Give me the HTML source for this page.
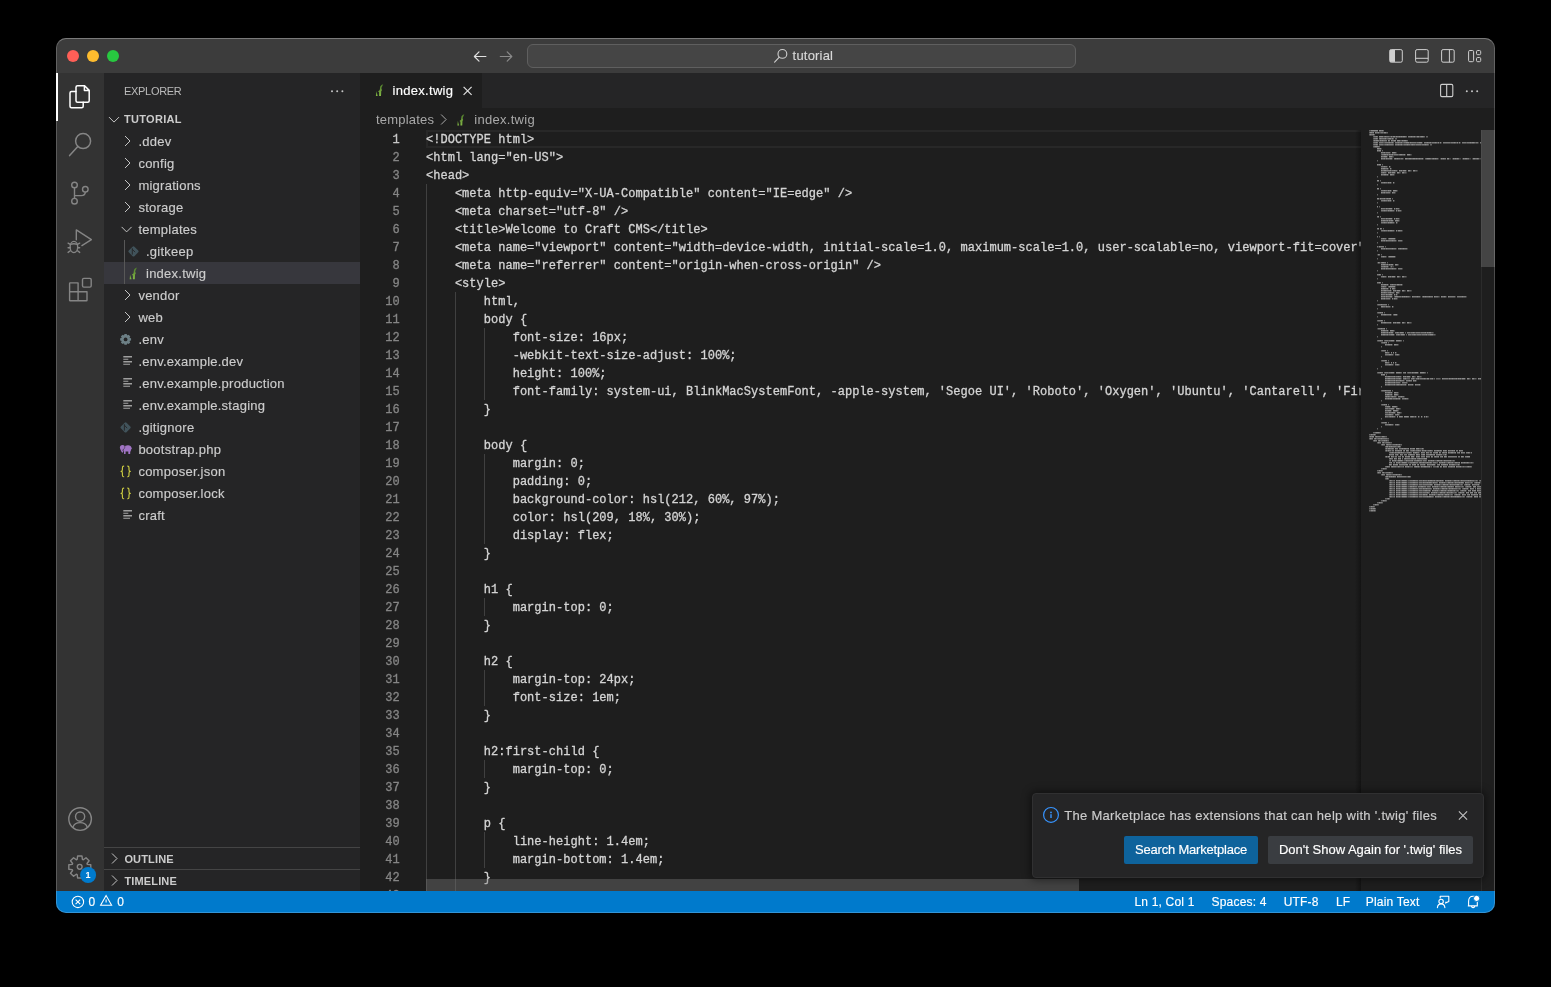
<!DOCTYPE html>
<html><head><meta charset="utf-8"><style>
*{box-sizing:border-box;margin:0;padding:0}
html,body{width:1551px;height:987px;background:#000;overflow:hidden;font-family:"Liberation Sans",sans-serif;color:#ccc}
#win{position:absolute;left:56px;top:38px;width:1439px;height:875px;border-radius:10px;overflow:hidden;background:#1e1e1e;will-change:transform}
#winborder{position:absolute;left:56px;top:38px;width:1439px;height:875px;border-radius:10px;border:1px solid rgba(255,255,255,0.2);border-top-color:rgba(255,255,255,0.32);pointer-events:none;z-index:50}
.a{position:absolute}
svg{position:absolute;overflow:visible}
#title{left:0;top:0;width:1439px;height:35px;background:#3c3c3c}
.tl{position:absolute;top:11.6px;width:12.4px;height:12.4px;border-radius:50%}
#search{position:absolute;left:471.4px;top:6.4px;width:548.6px;height:23.2px;border:1px solid #5f5f5f;background:#454545;border-radius:6px}
#act{left:0;top:35px;width:48px;height:818px;background:#333333}
#side{left:48px;top:35px;width:256px;height:818px;background:#252526}
#editor{left:304px;top:35px;width:1135px;height:818px;background:#1e1e1e;overflow:hidden}
#status{left:0;top:853px;width:1439px;height:22px;background:#007acc;color:#fff;font-size:12px}
.row{position:absolute;left:0;width:256px;height:22px;font-size:13px;line-height:22px;color:#cccccc;white-space:nowrap;letter-spacing:0.25px;-webkit-text-stroke:0.15px #cccccc}
.row span{position:absolute;top:0.5px}
.hdr{position:absolute;left:0;width:256px;height:22px;font-size:11px;font-weight:bold;line-height:22px;color:#cccccc;letter-spacing:0.15px}
.code{position:absolute;left:66px;top:1px;font-family:"Liberation Mono",monospace;font-size:12px;line-height:18px;color:#d4d4d4;white-space:pre;letter-spacing:0.022px;-webkit-text-stroke:0.3px #d4d4d4}
.ln{position:absolute;left:0;width:39.6px;text-align:right;font-family:"Liberation Mono",monospace;font-size:12px;line-height:18px;color:#858585;-webkit-text-stroke:0.3px currentColor}
.guide{position:absolute;width:1px;background:#404040}
.st{position:absolute;top:0;line-height:22px;white-space:nowrap;letter-spacing:0.2px;-webkit-text-stroke:0.15px #fff}
</style></head><body>
<div id="win">
<div id="title" class="a"><div class="tl" style="left:10.8px;background:#ff5f57"></div><div class="tl" style="left:30.8px;background:#febc2e"></div><div class="tl" style="left:50.8px;background:#28c840"></div><svg style="left:0;top:0" width="1" height="1"><g fill="none" stroke-width="1.2" stroke-linecap="round" stroke-linejoin="round"><path d="M418.4 18.5H429.9 M423 13.9L418.4 18.5L423 23.1" stroke="#e0e0e0"/><path d="M444.3 18.5H455.8 M451.2 13.9L455.8 18.5L451.2 23.1" stroke="#8a8a8a"/></g></svg><div id="search"></div><svg style="left:0;top:0" width="1" height="1"><g fill="none" stroke="#cfcfcf" stroke-width="1.1" stroke-linecap="round"><circle cx="726.4" cy="15.9" r="4.4"/><path d="M723.3 19.1L718.6 24.2"/></g></svg><div class="a" style="left:736.6px;top:9px;font-size:13px;line-height:17px;color:#d8d8d8;letter-spacing:0.2px;-webkit-text-stroke:0.15px #d8d8d8">tutorial</div><svg style="left:0;top:0" width="1" height="1"><g fill="none" stroke="#d0d0d0" stroke-width="1"><rect x="1333.7" y="11.6" width="12.6" height="12.6" rx="1.5"/><rect x="1334" y="11.9" width="5" height="12" fill="#d0d0d0" stroke="none"/><rect x="1359.6" y="11.6" width="12.6" height="12.6" rx="1.5"/><path d="M1359.6 20.3H1372.2"/><rect x="1385.6" y="11.6" width="12.6" height="12.6" rx="1.5"/><path d="M1393.4 11.6V24.2"/><rect x="1412.6" y="12.5" width="5" height="11.2" rx="1.2"/><rect x="1420.5" y="12.5" width="4.2" height="4.2" rx="1.2"/><rect x="1420.5" y="19.5" width="4.2" height="4.2" rx="1.2"/></g></svg></div>
<div id="act" class="a"><div class="a" style="left:0;top:0;width:2px;height:48px;background:#fff"></div></div>
<svg style="left:0;top:0" width="1" height="1"><g fill="none" stroke-width="1.5" stroke-linecap="round" stroke-linejoin="round"><path stroke="#ffffff" d="M20 49.3Q20 47.8 21.5 47.8H28.6L33.2 52.4V62.7Q33.2 64.2 31.7 64.2H21.5Q20 64.2 20 62.7Z M28.4 47.9V52.6H33.1"/><path stroke="#ffffff" d="M19.9 53.4H15.5Q14 53.4 14 54.9V68.3Q14 69.8 15.5 69.8H25.7Q27.2 69.8 27.2 68.3V64.3"/><g stroke="#858585"><circle cx="27.1" cy="103.1" r="7.5"/><path d="M21.8 108.4L13.6 117.6"/></g><g stroke="#858585" stroke-width="1.4"><circle cx="18.5" cy="147" r="2.8"/><circle cx="18.5" cy="163.2" r="2.8"/><circle cx="29.3" cy="151.3" r="2.8"/><path d="M18.5 149.8V160.4 M29.3 154.1Q29.3 157.6 25.3 157.6H18.6"/></g><g stroke="#858585" stroke-width="1.4"><path d="M20.3 201.8V191.9L35.4 201.6L25.9 207.6"/><ellipse cx="17.9" cy="209" rx="3.8" ry="5.6"/><path d="M14.4 206.4Q17.9 205.2 21.4 206.4 M12.1 205.2L14.3 206.4 M12.1 209.8H14.1 M12.1 214.4L14.3 212.8 M23.7 205.2L21.5 206.4 M23.7 209.8H21.7 M23.7 214.4L21.5 212.8"/></g><g stroke="#858585" stroke-width="1.4"><path d="M13.6 245.4Q13.6 244.9 14.1 244.9H22.1V253.8H31V262.2Q31 262.7 30.5 262.7H14.1Q13.6 262.7 13.6 262.2Z M13.6 253.8H22.1V262.7"/><rect x="26.5" y="240.4" width="8.7" height="8.7" rx="1.3"/></g><g stroke="#858585" stroke-width="1.4"><circle cx="24.1" cy="781.1" r="11.3"/><circle cx="24.1" cy="778.6" r="4.6"/><path d="M16.9 789.2Q18.5 784.6 24.1 784.6Q29.7 784.6 31.3 789.2"/></g></g></svg><svg style="left:0;top:0" width="1" height="1"><g fill="none" stroke="#858585" stroke-width="1.4" stroke-linejoin="round"><path d="M34.78 826.81 L34.78 831.19 L31.36 831.62 L31.00 832.49 L33.11 835.22 L30.02 838.31 L27.29 836.20 L26.42 836.56 L25.99 839.98 L21.61 839.98 L21.18 836.56 L20.31 836.20 L17.58 838.31 L14.49 835.22 L16.60 832.49 L16.24 831.62 L12.82 831.19 L12.82 826.81 L16.24 826.38 L16.60 825.51 L14.49 822.78 L17.58 819.69 L20.31 821.80 L21.18 821.44 L21.61 818.02 L25.99 818.02 L26.42 821.44 L27.29 821.80 L30.02 819.69 L33.11 822.78 L31.00 825.51 L31.36 826.38Z"/><circle cx="23.7" cy="828.8" r="2.4"/></g><circle cx="32.1" cy="837" r="8" fill="#007acc"/></svg><div class="a" style="left:24px;top:830px;width:16px;height:14px;text-align:center;font-size:9px;font-weight:bold;line-height:14px;color:#fff">1</div><div id="side" class="a"><div class="a" style="left:20px;top:1px;height:35px;line-height:35px;font-size:11px;color:#bbbbbb;letter-spacing:-0.3px">EXPLORER</div><svg style="left:0;top:0" width="1" height="1"><g fill="#c5c5c5"><circle cx="228" cy="18.2" r="1"/><circle cx="233.2" cy="18.2" r="1"/><circle cx="238.4" cy="18.2" r="1"/></g></svg><div class="hdr" style="top:35px"><span class="a" style="left:20px;top:-0.5px;letter-spacing:0.3px">TUTORIAL</span></div><svg style="left:0;top:0" width="1" height="1"><g stroke="#c5c5c5" fill="none" stroke-width="1"><path d="M5.0 44.1L10.0 49.1L15.0 44.1"/></g></svg><div class="row" style="top:57px"><span style="left:34.4px">.ddev</span></div><div class="row" style="top:79px"><span style="left:34.4px">config</span></div><div class="row" style="top:101px"><span style="left:34.4px">migrations</span></div><div class="row" style="top:123px"><span style="left:34.4px">storage</span></div><div class="row" style="top:145px"><span style="left:34.4px">templates</span></div><div class="row" style="top:167px"><span style="left:42.0px">.gitkeep</span></div><div class="a" style="left:0;top:189px;width:256px;height:22px;background:#37373d"></div><div class="row" style="top:189px"><span style="left:42.0px">index.twig</span></div><div class="row" style="top:211px"><span style="left:34.4px">vendor</span></div><div class="row" style="top:233px"><span style="left:34.4px">web</span></div><div class="row" style="top:255px"><span style="left:34.4px">.env</span></div><div class="row" style="top:277px"><span style="left:34.4px">.env.example.dev</span></div><div class="row" style="top:299px"><span style="left:34.4px">.env.example.production</span></div><div class="row" style="top:321px"><span style="left:34.4px">.env.example.staging</span></div><div class="row" style="top:343px"><span style="left:34.4px">.gitignore</span></div><div class="row" style="top:365px"><span style="left:34.4px">bootstrap.php</span></div><div class="row" style="top:387px"><span style="left:34.4px">composer.json</span></div><div class="row" style="top:409px"><span style="left:34.4px">composer.lock</span></div><div class="row" style="top:431px"><span style="left:34.4px">craft</span></div><div class="a" style="left:20px;top:167px;width:1px;height:44px;background:#585858"></div><svg style="left:0;top:0" width="1" height="1"><defs><linearGradient id="twg" x1="0" y1="0" x2="0" y2="1"><stop offset="0" stop-color="#4d7a2a"/><stop offset="0.55" stop-color="#6e9f3a"/><stop offset="1" stop-color="#82b846"/></linearGradient></defs><g stroke="#c5c5c5" fill="none" stroke-width="1"><path d="M21.0 63.0L26.0 68.0L21.0 73.0"/></g><g stroke="#c5c5c5" fill="none" stroke-width="1"><path d="M21.0 85.0L26.0 90.0L21.0 95.0"/></g><g stroke="#c5c5c5" fill="none" stroke-width="1"><path d="M21.0 107.0L26.0 112.0L21.0 117.0"/></g><g stroke="#c5c5c5" fill="none" stroke-width="1"><path d="M21.0 129.0L26.0 134.0L21.0 139.0"/></g><g stroke="#c5c5c5" fill="none" stroke-width="1"><path d="M17.6 153.9L22.6 158.9L27.6 153.9"/></g><g stroke="#c5c5c5" fill="none" stroke-width="1"><path d="M21.0 217.0L26.0 222.0L21.0 227.0"/></g><g stroke="#c5c5c5" fill="none" stroke-width="1"><path d="M21.0 239.0L26.0 244.0L21.0 249.0"/></g><g transform="translate(25.70 194.10) scale(1.000)" fill="url(#twg)"><path d="M3.2 12.1L5.1 12.1L5.35 7.45L6.05 6.45L5.45 4.2L7.3 0.4L5.5 1.2L4.3 2.6L3.85 6.2L2.2 7.6L3.2 8.3Z"/><path d="M0 12.1L1.8 12.1L1.3 10.2L0.4 7.2Z"/></g><g><rect x="25.50" y="174.40" width="8" height="8" rx="1.3" transform="rotate(45 29.50 178.40)" fill="#41535b"/><path d="M28.30 175.20L28.30 181.60 M28.30 176.20L31.10 179.20" stroke="#252526" stroke-width="0.9"/></g><g><rect x="17.60" y="350.40" width="8" height="8" rx="1.3" transform="rotate(45 21.60 354.40)" fill="#41535b"/><path d="M20.40 351.20L20.40 357.60 M20.40 352.20L23.20 355.20" stroke="#252526" stroke-width="0.9"/></g><g fill="#6d8086"><path d="M27.07 265.20 L27.07 267.60 L25.54 267.85 L25.41 268.16 L26.32 269.42 L24.62 271.12 L23.36 270.21 L23.05 270.34 L22.80 271.87 L20.40 271.87 L20.15 270.34 L19.84 270.21 L18.58 271.12 L16.88 269.42 L17.79 268.16 L17.66 267.85 L16.13 267.60 L16.13 265.20 L17.66 264.95 L17.79 264.64 L16.88 263.38 L18.58 261.68 L19.84 262.59 L20.15 262.46 L20.40 260.93 L22.80 260.93 L23.05 262.46 L23.36 262.59 L24.62 261.68 L26.32 263.38 L25.41 264.64 L25.54 264.95Z"/><circle cx="21.6" cy="266.4" r="4.3"/></g><circle cx="21.6" cy="266.4" r="1.9" fill="#252526"/><g fill="#bdbdbd"><rect x="19.3" y="283.2" width="8.7" height="1.2"/><rect x="19.3" y="285.7" width="5" height="1.2" fill="#8f8f8f"/><rect x="19.3" y="288.2" width="8.7" height="1.2"/><rect x="19.3" y="290.7" width="6.7" height="1.2" fill="#8f8f8f"/></g><g fill="#bdbdbd"><rect x="19.3" y="305.2" width="8.7" height="1.2"/><rect x="19.3" y="307.7" width="5" height="1.2" fill="#8f8f8f"/><rect x="19.3" y="310.2" width="8.7" height="1.2"/><rect x="19.3" y="312.7" width="6.7" height="1.2" fill="#8f8f8f"/></g><g fill="#bdbdbd"><rect x="19.3" y="327.2" width="8.7" height="1.2"/><rect x="19.3" y="329.7" width="5" height="1.2" fill="#8f8f8f"/><rect x="19.3" y="332.2" width="8.7" height="1.2"/><rect x="19.3" y="334.7" width="6.7" height="1.2" fill="#8f8f8f"/></g><g fill="#bdbdbd"><rect x="19.3" y="437.2" width="8.7" height="1.2"/><rect x="19.3" y="439.7" width="5" height="1.2" fill="#8f8f8f"/><rect x="19.3" y="442.2" width="8.7" height="1.2"/><rect x="19.3" y="444.7" width="6.7" height="1.2" fill="#8f8f8f"/></g><g transform="translate(15.5 371.9)"><g fill="#a074c4"><ellipse cx="3.0" cy="2.7" rx="2.6" ry="2.5"/><path d="M4.4 1.8Q5.8 0.2 8.6 0.3Q11.6 0.4 12.4 3.6Q11.6 4.2 11.0 6.6H4.4Z"/><rect x="4.5" y="5" width="1.6" height="4.1" rx="0.6"/><rect x="8.8" y="5" width="1.9" height="4.1" rx="0.6"/><path d="M1.0 3.6Q1.2 7.2 3.3 7.9L4.2 5.4Z"/></g><path d="M5.4 1.0Q5.3 3.2 4.6 3.9Q3.8 5 2.7 5.6" stroke="#252526" stroke-width="0.5" fill="none"/></g><g fill="none" stroke="#cbcb41" stroke-width="1.15" stroke-linecap="round" stroke-linejoin="round"><path d="M19.7 393.10Q18.4 393.10 18.4 394.90V396.80Q18.4 398.40 17.1 398.40Q18.4 398.40 18.4 400.00V401.90Q18.4 403.70 19.7 403.70"/><path d="M23.7 393.10Q25.0 393.10 25.0 394.90V396.80Q25.0 398.40 26.3 398.40Q25.0 398.40 25.0 400.00V401.90Q25.0 403.70 23.7 403.70"/></g><g fill="none" stroke="#cbcb41" stroke-width="1.15" stroke-linecap="round" stroke-linejoin="round"><path d="M19.7 415.10Q18.4 415.10 18.4 416.90V418.80Q18.4 420.40 17.1 420.40Q18.4 420.40 18.4 422.00V423.90Q18.4 425.70 19.7 425.70"/><path d="M23.7 415.10Q25.0 415.10 25.0 416.90V418.80Q25.0 420.40 26.3 420.40Q25.0 420.40 25.0 422.00V423.90Q25.0 425.70 23.7 425.70"/></g></svg><div class="a" style="left:0;top:774px;width:256px;height:1px;background:#454545"></div><div class="a" style="left:0;top:796px;width:256px;height:1px;background:#454545"></div><div class="hdr" style="top:775px"><span class="a" style="left:20.4px;top:-0.5px">OUTLINE</span></div><div class="hdr" style="top:797px"><span class="a" style="left:20.4px;top:-0.5px">TIMELINE</span></div><svg style="left:0;top:0" width="1" height="1"><g stroke="#c5c5c5" fill="none" stroke-width="1"><path d="M8.0 780.5L13.0 785.5L8.0 790.5"/><path d="M8.0 802.5L13.0 807.5L8.0 812.5"/></g></svg></div>
<div id="editor" class="a"><div class="a" style="left:0;top:0;width:1135px;height:35px;background:#252526"></div><div class="a" style="left:0;top:0;width:122px;height:35px;background:#1e1e1e"></div><div class="a" style="left:32.5px;top:0;height:35px;line-height:35px;font-size:13px;color:#ffffff;letter-spacing:0.3px;-webkit-text-stroke:0.15px #fff">index.twig</div><svg style="left:0;top:0" width="1" height="1"><g transform="translate(15.90 10.90) scale(1.000)" fill="url(#twg)"><path d="M3.2 12.1L5.1 12.1L5.35 7.45L6.05 6.45L5.45 4.2L7.3 0.4L5.5 1.2L4.3 2.6L3.85 6.2L2.2 7.6L3.2 8.3Z"/><path d="M0 12.1L1.8 12.1L1.3 10.2L0.4 7.2Z"/></g><g stroke="#e0e0e0" stroke-width="1.2" fill="none"><path d="M103.6 13.9L111.6 21.9M111.6 13.9L103.6 21.9"/></g><g stroke="#d0d0d0" stroke-width="1.1" fill="none"><rect x="1080.6" y="11.4" width="12.2" height="12.2" rx="1.3"/><path d="M1086.7 11.4V23.6"/></g><g fill="#c5c5c5"><circle cx="1106.8" cy="18.3" r="1"/><circle cx="1112" cy="18.3" r="1"/><circle cx="1117.2" cy="18.3" r="1"/></g></svg><div class="a" style="left:16px;top:36px;height:22px;line-height:22px;font-size:13px;color:#a9a9a9;letter-spacing:0.2px">templates</div><div class="a" style="left:114.2px;top:36px;height:22px;line-height:22px;font-size:13px;color:#a9a9a9;letter-spacing:0.3px">index.twig</div><svg style="left:0;top:0" width="1" height="1"><g stroke="#a9a9a9" fill="none" stroke-width="1"><path d="M81.1 41.5L86.1 46.5L81.1 51.5"/></g><g transform="translate(97.40 40.90) scale(0.950)" fill="url(#twg)"><path d="M3.2 12.1L5.1 12.1L5.35 7.45L6.05 6.45L5.45 4.2L7.3 0.4L5.5 1.2L4.3 2.6L3.85 6.2L2.2 7.6L3.2 8.3Z"/><path d="M0 12.1L1.8 12.1L1.3 10.2L0.4 7.2Z"/></g></svg><div class="a" style="left:66px;top:57px;width:935px;height:18px;border:2px solid #282828;border-right:none"></div><div class="ln" style="top:58px;color:#c6c6c6;">1</div><div class="ln" style="top:76px;">2</div><div class="ln" style="top:94px;">3</div><div class="ln" style="top:112px;">4</div><div class="ln" style="top:130px;">5</div><div class="ln" style="top:148px;">6</div><div class="ln" style="top:166px;">7</div><div class="ln" style="top:184px;">8</div><div class="ln" style="top:202px;">9</div><div class="ln" style="top:220px;">10</div><div class="ln" style="top:238px;">11</div><div class="ln" style="top:256px;">12</div><div class="ln" style="top:274px;">13</div><div class="ln" style="top:292px;">14</div><div class="ln" style="top:310px;">15</div><div class="ln" style="top:328px;">16</div><div class="ln" style="top:346px;">17</div><div class="ln" style="top:364px;">18</div><div class="ln" style="top:382px;">19</div><div class="ln" style="top:400px;">20</div><div class="ln" style="top:418px;">21</div><div class="ln" style="top:436px;">22</div><div class="ln" style="top:454px;">23</div><div class="ln" style="top:472px;">24</div><div class="ln" style="top:490px;">25</div><div class="ln" style="top:508px;">26</div><div class="ln" style="top:526px;">27</div><div class="ln" style="top:544px;">28</div><div class="ln" style="top:562px;">29</div><div class="ln" style="top:580px;">30</div><div class="ln" style="top:598px;">31</div><div class="ln" style="top:616px;">32</div><div class="ln" style="top:634px;">33</div><div class="ln" style="top:652px;">34</div><div class="ln" style="top:670px;">35</div><div class="ln" style="top:688px;">36</div><div class="ln" style="top:706px;">37</div><div class="ln" style="top:724px;">38</div><div class="ln" style="top:742px;">39</div><div class="ln" style="top:760px;">40</div><div class="ln" style="top:778px;">41</div><div class="ln" style="top:796px;">42</div><div class="ln" style="top:814px;">43</div><div class="a" style="left:0;top:57px;width:1001px;height:761px;overflow:hidden"><div class="guide" style="left:66.0px;top:54px;height:720px"></div><div class="guide" style="left:94.8px;top:162px;height:612px"></div><div class="guide" style="left:123.6px;top:198px;height:72px"></div><div class="guide" style="left:123.6px;top:324px;height:90px"></div><div class="guide" style="left:123.6px;top:468px;height:18px"></div><div class="guide" style="left:123.6px;top:540px;height:36px"></div><div class="guide" style="left:123.6px;top:630px;height:18px"></div><div class="guide" style="left:123.6px;top:702px;height:36px"></div><div class="code" style="left:66px;top:1px">&lt;!DOCTYPE html&gt;</div><div class="code" style="left:66px;top:19px">&lt;html lang="en-US"&gt;</div><div class="code" style="left:66px;top:37px">&lt;head&gt;</div><div class="code" style="left:66px;top:55px">    &lt;meta http-equiv="X-UA-Compatible" content="IE=edge" /&gt;</div><div class="code" style="left:66px;top:73px">    &lt;meta charset="utf-8" /&gt;</div><div class="code" style="left:66px;top:91px">    &lt;title&gt;Welcome to Craft CMS&lt;/title&gt;</div><div class="code" style="left:66px;top:109px">    &lt;meta name="viewport" content="width=device-width, initial-scale=1.0, maximum-scale=1.0, user-scalable=no, viewport-fit=cover" /&gt;</div><div class="code" style="left:66px;top:127px">    &lt;meta name="referrer" content="origin-when-cross-origin" /&gt;</div><div class="code" style="left:66px;top:145px">    &lt;style&gt;</div><div class="code" style="left:66px;top:163px">        html,</div><div class="code" style="left:66px;top:181px">        body {</div><div class="code" style="left:66px;top:199px">            font-size: 16px;</div><div class="code" style="left:66px;top:217px">            -webkit-text-size-adjust: 100%;</div><div class="code" style="left:66px;top:235px">            height: 100%;</div><div class="code" style="left:66px;top:253px">            font-family: system-ui, BlinkMacSystemFont, -apple-system, 'Segoe UI', 'Roboto', 'Oxygen', 'Ubuntu', 'Cantarell', 'Fira Sans', 'Droid Sans', 'Helvetica Neue', sans-serif;</div><div class="code" style="left:66px;top:271px">        }</div><div class="code" style="left:66px;top:289px"></div><div class="code" style="left:66px;top:307px">        body {</div><div class="code" style="left:66px;top:325px">            margin: 0;</div><div class="code" style="left:66px;top:343px">            padding: 0;</div><div class="code" style="left:66px;top:361px">            background-color: hsl(212, 60%, 97%);</div><div class="code" style="left:66px;top:379px">            color: hsl(209, 18%, 30%);</div><div class="code" style="left:66px;top:397px">            display: flex;</div><div class="code" style="left:66px;top:415px">        }</div><div class="code" style="left:66px;top:433px"></div><div class="code" style="left:66px;top:451px">        h1 {</div><div class="code" style="left:66px;top:469px">            margin-top: 0;</div><div class="code" style="left:66px;top:487px">        }</div><div class="code" style="left:66px;top:505px"></div><div class="code" style="left:66px;top:523px">        h2 {</div><div class="code" style="left:66px;top:541px">            margin-top: 24px;</div><div class="code" style="left:66px;top:559px">            font-size: 1em;</div><div class="code" style="left:66px;top:577px">        }</div><div class="code" style="left:66px;top:595px"></div><div class="code" style="left:66px;top:613px">        h2:first-child {</div><div class="code" style="left:66px;top:631px">            margin-top: 0;</div><div class="code" style="left:66px;top:649px">        }</div><div class="code" style="left:66px;top:667px"></div><div class="code" style="left:66px;top:685px">        p {</div><div class="code" style="left:66px;top:703px">            line-height: 1.4em;</div><div class="code" style="left:66px;top:721px">            margin-bottom: 1.4em;</div><div class="code" style="left:66px;top:739px">        }</div><div class="code" style="left:66px;top:757px"></div></div><svg style="left:0;top:0" width="1" height="1" shape-rendering="crispEdges"><path fill="#d4d4d4" fill-opacity="0.22" d="M1062 69h1v2h-1zM1079 69h1v2h-1zM1081 69h1v2h-1zM1098 69h1v2h-1zM1100 69h1v2h-1zM1118 69h1v2h-1zM1021 75h1v2h-1zM1030 79h1v2h-1zM1036 79h1v2h-1zM1045 81h1v2h-1zM1051 81h1v2h-1zM1027 83h1v2h-1zM1033 83h1v2h-1zM1032 85h1v2h-1zM1043 85h1v2h-1zM1063 85h1v2h-1zM1078 85h1v2h-1zM1080 85h1v2h-1zM1089 85h2v2h-2zM1092 85h1v2h-1zM1099 85h2v2h-2zM1102 85h1v2h-1zM1109 85h2v2h-2zM1112 85h1v2h-1zM1119 85h2v2h-2zM1027 93h1v2h-1zM1030 93h1v2h-1zM1028 95h1v2h-1zM1031 95h1v2h-1zM1037 97h1v2h-1zM1046 97h1v2h-1zM1051 97h1v2h-1zM1057 97h1v2h-1zM1026 99h1v2h-1zM1035 99h1v2h-1zM1040 99h1v2h-1zM1046 99h1v2h-1zM1028 101h1v2h-1zM1034 101h1v2h-1zM1031 109h1v2h-1zM1034 109h1v2h-1zM1031 117h1v2h-1zM1037 117h1v2h-1zM1030 119h1v2h-1zM1035 119h1v2h-1zM1019 125h1v2h-1zM1031 127h1v2h-1zM1034 127h1v2h-1zM1032 135h1v2h-1zM1035 135h1v2h-1zM1039 135h1v2h-1zM1034 137h1v2h-1zM1037 137h1v2h-1zM1041 137h1v2h-1zM1032 145h1v2h-1zM1035 145h1v2h-1zM1039 145h1v2h-1zM1033 147h1v2h-1zM1039 147h1v2h-1zM1034 149h1v2h-1zM1037 149h1v2h-1zM1034 157h1v2h-1zM1037 157h1v2h-1zM1042 157h1v2h-1zM1026 165h1v2h-1zM1035 165h1v2h-1zM1036 167h1v2h-1zM1042 167h1v2h-1zM1018 173h1v2h-1zM1036 175h1v2h-1zM1047 175h1v2h-1zM1017 181h1v2h-1zM1026 183h1v2h-1zM1035 183h1v2h-1zM1017 189h1v2h-1zM1020 189h1v2h-1zM1033 191h1v2h-1zM1038 191h1v2h-1zM1028 193h1v2h-1zM1030 193h1v2h-1zM1032 193h2v2h-2zM1036 195h1v2h-1zM1042 195h1v2h-1zM1026 203h1v2h-1zM1035 203h1v2h-1zM1040 203h1v2h-1zM1046 203h1v2h-1zM1028 211h1v2h-1zM1042 211h1v2h-1zM1026 213h1v2h-1zM1035 213h1v2h-1zM1028 215h1v2h-1zM1035 215h1v2h-1zM1031 217h1v2h-1zM1040 217h1v2h-1zM1045 217h1v2h-1zM1051 217h1v2h-1zM1034 219h1v2h-1zM1039 219h1v2h-1zM1032 221h1v2h-1zM1035 221h1v2h-1zM1037 221h1v2h-1zM1032 223h1v2h-1zM1050 223h1v2h-1zM1060 223h1v2h-1zM1079 223h1v2h-1zM1086 223h1v2h-1zM1095 223h1v2h-1zM1106 223h1v2h-1zM1030 225h1v2h-1zM1033 225h1v2h-1zM1037 225h1v2h-1zM1030 233h1v2h-1zM1033 233h1v2h-1zM1031 241h1v2h-1zM1037 241h1v2h-1zM1031 249h1v2h-1zM1040 249h1v2h-1zM1045 249h1v2h-1zM1051 249h1v2h-1zM1017 255h1v2h-1zM1028 257h1v2h-1zM1034 257h1v2h-1zM1033 259h1v2h-1zM1073 259h1v2h-1zM1034 261h1v2h-1zM1075 261h1v2h-1zM1034 267h1v2h-1zM1032 271h1v2h-1zM1038 271h1v2h-1zM1029 279h1v2h-1zM1036 279h1v2h-1zM1033 281h1v2h-1zM1039 281h1v2h-1zM1029 289h1v2h-1zM1036 289h1v2h-1zM1033 291h1v2h-1zM1039 291h1v2h-1zM1034 299h1v2h-1zM1058 299h1v2h-1zM1041 303h1v2h-1zM1050 303h1v2h-1zM1055 303h1v2h-1zM1061 303h1v2h-1zM1041 305h1v2h-1zM1055 305h1v2h-1zM1069 305h1v2h-1zM1073 305h1v2h-1zM1080 305h1v2h-1zM1105 305h1v2h-1zM1110 305h1v2h-1zM1116 305h1v2h-1zM1044 307h1v2h-1zM1056 307h1v2h-1zM1040 309h1v2h-1zM1047 309h1v2h-1zM1046 311h1v2h-1zM1053 311h1v2h-1zM1060 311h1v2h-1zM1032 319h1v2h-1zM1038 319h1v2h-1zM1032 321h1v2h-1zM1038 321h1v2h-1zM1036 323h1v2h-1zM1044 323h1v2h-1zM1040 325h1v2h-1zM1048 325h1v2h-1zM1030 333h1v2h-1zM1037 333h1v2h-1zM1034 335h1v2h-1zM1040 335h1v2h-1zM1031 337h1v2h-1zM1038 337h1v2h-1zM1035 339h1v2h-1zM1041 339h1v2h-1zM1033 341h1v2h-1zM1039 341h1v2h-1zM1035 343h1v2h-1zM1056 343h1v2h-1zM1059 343h1v2h-1zM1062 343h1v2h-1zM1065 343h1v2h-1zM1068 343h1v2h-1zM1033 351h1v2h-1zM1039 351h1v2h-1zM1031 377h1v2h-1zM1061 377h1v2h-1zM1059 379h1v2h-1zM1069 379h1v2h-1zM1110 379h1v2h-1zM1038 381h1v2h-1zM1082 381h1v2h-1zM1034 383h1v2h-1zM1054 383h1v2h-1zM1056 385h1v2h-1zM1043 387h1v2h-1zM1053 387h1v2h-1zM1062 387h1v2h-1zM1047 389h1v2h-1zM1058 389h1v2h-1zM1072 389h1v2h-1zM1113 389h1v2h-1zM1065 391h1v2h-1zM1075 391h1v2h-1zM1060 393h1v2h-1zM1070 393h1v2h-1zM1047 407h1v2h-1zM1058 407h1v2h-1zM1047 409h1v2h-1zM1058 409h1v2h-1zM1120 409h1v2h-1zM1047 411h1v2h-1zM1058 411h1v2h-1zM1110 411h1v2h-1zM1119 411h1v2h-1zM1047 413h1v2h-1zM1057 413h1v2h-1zM1066 413h1v2h-1zM1111 413h1v2h-1zM1047 415h1v2h-1zM1058 415h1v2h-1zM1108 415h1v2h-1zM1047 417h1v2h-1zM1058 417h1v2h-1zM1106 417h1v2h-1zM1047 419h1v2h-1zM1058 419h1v2h-1zM1104 419h1v2h-1zM1047 421h1v2h-1zM1058 421h1v2h-1zM1100 421h1v2h-1zM1047 423h1v2h-1zM1058 423h1v2h-1zM1112 423h1v2h-1z"/><path fill="#d4d4d4" fill-opacity="0.38" d="M1009 57h2v2h-2zM1023 57h1v2h-1zM1009 59h1v2h-1zM1019 59h2v2h-2zM1023 59h1v2h-1zM1026 59h2v2h-2zM1009 61h1v2h-1zM1014 61h1v2h-1zM1013 63h1v2h-1zM1023 63h1v2h-1zM1029 63h2v2h-2zM1032 63h1v2h-1zM1035 63h1v2h-1zM1046 63h1v2h-1zM1055 63h2v2h-2zM1059 63h1v2h-1zM1064 63h1v2h-1zM1066 63h2v2h-2zM1013 65h1v2h-1zM1026 65h2v2h-2zM1031 65h1v2h-1zM1033 65h1v2h-1zM1035 65h2v2h-2zM1013 67h1v2h-1zM1019 67h1v2h-1zM1040 67h2v2h-2zM1047 67h1v2h-1zM1013 69h1v2h-1zM1023 69h2v2h-2zM1033 69h1v2h-1zM1042 69h2v2h-2zM1049 69h1v2h-1zM1056 69h1v2h-1zM1071 69h1v2h-1zM1077 69h1v2h-1zM1090 69h1v2h-1zM1096 69h1v2h-1zM1106 69h1v2h-1zM1115 69h1v2h-1zM1013 71h1v2h-1zM1023 71h2v2h-2zM1033 71h1v2h-1zM1042 71h2v2h-2zM1050 71h1v2h-1zM1055 71h1v2h-1zM1061 71h1v2h-1zM1068 71h1v2h-1zM1070 71h2v2h-2zM1013 73h1v2h-1zM1019 73h1v2h-1zM1022 77h1v2h-1zM1025 79h1v2h-1zM1021 81h1v2h-1zM1028 81h1v2h-1zM1033 81h1v2h-1zM1038 81h1v2h-1zM1050 81h1v2h-1zM1032 83h1v2h-1zM1025 85h1v2h-1zM1040 85h1v2h-1zM1065 85h1v2h-1zM1071 85h1v2h-1zM1017 87h1v2h-1zM1022 91h1v2h-1zM1031 97h1v2h-1zM1042 97h1v2h-1zM1050 97h1v2h-1zM1055 97h2v2h-2zM1031 99h1v2h-1zM1039 99h1v2h-1zM1044 99h2v2h-2zM1017 103h1v2h-1zM1020 107h1v2h-1zM1027 109h1v2h-1zM1017 111h1v2h-1zM1020 115h1v2h-1zM1027 117h1v2h-1zM1025 119h1v2h-1zM1017 121h1v2h-1zM1025 125h1v2h-1zM1032 125h1v2h-1zM1027 127h1v2h-1zM1017 129h1v2h-1zM1019 133h1v2h-1zM1025 135h1v2h-1zM1027 137h1v2h-1zM1017 139h1v2h-1zM1020 143h1v2h-1zM1025 145h1v2h-1zM1028 147h1v2h-1zM1027 149h1v2h-1zM1017 151h1v2h-1zM1023 155h1v2h-1zM1027 157h1v2h-1zM1017 159h1v2h-1zM1019 163h1v2h-1zM1028 165h1v2h-1zM1025 167h1v2h-1zM1017 169h1v2h-1zM1025 173h1v2h-1zM1025 175h1v2h-1zM1017 177h1v2h-1zM1021 181h1v2h-1zM1028 183h1v2h-1zM1017 185h1v2h-1zM1027 189h1v2h-1zM1028 191h1v2h-1zM1025 195h1v2h-1zM1017 197h1v2h-1zM1022 201h1v2h-1zM1031 203h1v2h-1zM1039 203h1v2h-1zM1044 203h2v2h-2zM1017 205h1v2h-1zM1022 209h1v2h-1zM1036 211h1v2h-1zM1028 213h1v2h-1zM1036 217h1v2h-1zM1044 217h1v2h-1zM1049 217h2v2h-2zM1027 219h1v2h-1zM1025 221h1v2h-1zM1025 223h1v2h-1zM1034 223h1v2h-1zM1041 223h1v2h-1zM1049 223h1v2h-1zM1062 223h1v2h-1zM1078 223h1v2h-1zM1025 225h1v2h-1zM1017 227h1v2h-1zM1017 231h1v2h-1zM1028 231h1v2h-1zM1025 233h1v2h-1zM1017 235h1v2h-1zM1017 239h1v2h-1zM1024 239h1v2h-1zM1033 241h1v2h-1zM1017 243h1v2h-1zM1017 247h1v2h-1zM1024 247h1v2h-1zM1036 249h1v2h-1zM1044 249h1v2h-1zM1049 249h2v2h-2zM1017 251h1v2h-1zM1026 255h1v2h-1zM1028 259h1v2h-1zM1039 259h1v2h-1zM1045 259h1v2h-1zM1050 259h1v2h-1zM1055 259h1v2h-1zM1060 259h1v2h-1zM1066 259h1v2h-1zM1071 259h2v2h-2zM1028 261h1v2h-1zM1040 261h1v2h-1zM1046 261h1v2h-1zM1051 261h1v2h-1zM1056 261h1v2h-1zM1061 261h1v2h-1zM1067 261h1v2h-1zM1073 261h2v2h-2zM1017 263h1v2h-1zM1017 267h1v2h-1zM1024 267h1v2h-1zM1028 267h1v2h-1zM1041 267h1v2h-1zM1043 267h1v2h-1zM1021 269h1v2h-1zM1028 269h1v2h-1zM1021 273h1v2h-1zM1021 277h1v2h-1zM1027 277h1v2h-1zM1021 283h1v2h-1zM1021 287h1v2h-1zM1028 287h1v2h-1zM1021 293h1v2h-1zM1017 295h1v2h-1zM1017 299h1v2h-1zM1024 299h1v2h-1zM1028 299h1v2h-1zM1041 299h1v2h-1zM1047 299h1v2h-1zM1051 299h1v2h-1zM1065 299h1v2h-1zM1067 299h1v2h-1zM1026 301h1v2h-1zM1035 303h1v2h-1zM1046 303h1v2h-1zM1054 303h1v2h-1zM1059 303h2v2h-2zM1035 305h1v2h-1zM1046 305h4v2h-4zM1054 305h1v2h-1zM1059 305h1v2h-1zM1066 305h1v2h-1zM1074 305h1v2h-1zM1076 305h4v2h-4zM1088 305h1v2h-1zM1097 305h1v2h-1zM1101 305h1v2h-1zM1109 305h1v2h-1zM1114 305h2v2h-2zM1035 307h1v2h-1zM1035 309h1v2h-1zM1035 311h1v2h-1zM1021 313h1v2h-1zM1021 317h1v2h-1zM1032 317h1v2h-1zM1030 323h1v2h-1zM1032 325h1v2h-1zM1021 327h1v2h-1zM1021 331h1v2h-1zM1028 331h1v2h-1zM1028 335h1v2h-1zM1039 335h1v2h-1zM1028 339h1v2h-1zM1040 339h1v2h-1zM1028 343h1v2h-1zM1054 343h1v2h-1zM1067 343h1v2h-1zM1021 345h1v2h-1zM1021 349h1v2h-1zM1028 349h1v2h-1zM1021 353h1v2h-1zM1017 355h1v2h-1zM1013 359h2v2h-2zM1020 359h1v2h-1zM1009 361h2v2h-2zM1015 361h1v2h-1zM1009 363h1v2h-1zM1020 363h2v2h-2zM1025 363h2v2h-2zM1009 365h1v2h-1zM1016 365h2v2h-2zM1027 365h2v2h-2zM1013 367h1v2h-1zM1020 367h2v2h-2zM1027 367h2v2h-2zM1017 369h1v2h-1zM1024 369h2v2h-2zM1030 369h2v2h-2zM1021 371h1v2h-1zM1031 371h2v2h-2zM1040 371h2v2h-2zM1025 373h1v2h-1zM1028 373h1v2h-1zM1036 373h2v2h-2zM1040 373h1v2h-1zM1025 375h1v2h-1zM1027 375h1v2h-1zM1059 375h3v2h-3zM1063 375h1v2h-1zM1025 377h1v2h-1zM1027 377h1v2h-1zM1050 377h1v2h-1zM1055 377h1v2h-1zM1066 377h2v2h-2zM1072 377h1v2h-1zM1029 379h1v2h-1zM1034 379h1v2h-1zM1044 379h3v2h-3zM1051 379h1v2h-1zM1083 381h2v2h-2zM1086 381h1v2h-1zM1025 383h1v2h-1zM1027 383h1v2h-1zM1050 385h1v2h-1zM1029 387h1v2h-1zM1036 387h2v2h-2zM1044 387h2v2h-2zM1066 387h1v2h-1zM1074 387h3v2h-3zM1082 387h2v2h-2zM1091 387h2v2h-2zM1094 387h1v2h-1zM1033 389h1v2h-1zM1040 389h2v2h-2zM1048 389h2v2h-2zM1076 389h2v2h-2zM1085 389h3v2h-3zM1093 389h2v2h-2zM1109 389h2v2h-2zM1112 389h1v2h-1zM1095 391h3v2h-3zM1099 391h1v2h-1zM1025 393h1v2h-1zM1036 393h2v2h-2zM1040 393h3v2h-3zM1049 393h4v2h-4zM1059 393h1v2h-1zM1071 393h1v2h-1zM1073 393h4v2h-4zM1101 393h2v2h-2zM1104 393h3v2h-3zM1111 393h1v2h-1zM1021 395h2v2h-2zM1026 395h1v2h-1zM1017 397h2v2h-2zM1022 397h1v2h-1zM1017 399h1v2h-1zM1024 399h2v2h-2zM1031 399h2v2h-2zM1021 401h1v2h-1zM1031 401h2v2h-2zM1040 401h2v2h-2zM1025 403h1v2h-1zM1028 403h1v2h-1zM1046 403h2v2h-2zM1050 403h1v2h-1zM1025 405h1v2h-1zM1028 405h1v2h-1zM1029 407h1v2h-1zM1032 407h2v2h-2zM1040 407h2v2h-2zM1048 407h2v2h-2zM1062 407h1v2h-1zM1067 407h1v2h-1zM1075 407h1v2h-1zM1083 407h1v2h-1zM1091 407h3v2h-3zM1099 407h2v2h-2zM1114 407h2v2h-2zM1117 407h1v2h-1zM1119 407h1v2h-1zM1029 409h1v2h-1zM1032 409h2v2h-2zM1040 409h2v2h-2zM1048 409h2v2h-2zM1062 409h1v2h-1zM1072 409h1v2h-1zM1077 409h1v2h-1zM1085 409h3v2h-3zM1093 409h2v2h-2zM1109 409h2v2h-2zM1112 409h1v2h-1zM1114 409h1v2h-1zM1029 411h1v2h-1zM1032 411h2v2h-2zM1040 411h2v2h-2zM1048 411h2v2h-2zM1062 411h1v2h-1zM1072 411h1v2h-1zM1080 411h3v2h-3zM1088 411h2v2h-2zM1099 411h2v2h-2zM1102 411h1v2h-1zM1104 411h1v2h-1zM1029 413h1v2h-1zM1032 413h2v2h-2zM1040 413h2v2h-2zM1048 413h2v2h-2zM1070 413h1v2h-1zM1078 413h3v2h-3zM1086 413h2v2h-2zM1100 413h2v2h-2zM1103 413h1v2h-1zM1105 413h1v2h-1zM1029 415h1v2h-1zM1032 415h2v2h-2zM1040 415h2v2h-2zM1048 415h2v2h-2zM1062 415h1v2h-1zM1071 415h1v2h-1zM1079 415h3v2h-3zM1087 415h2v2h-2zM1097 415h2v2h-2zM1100 415h1v2h-1zM1102 415h1v2h-1zM1029 417h1v2h-1zM1032 417h2v2h-2zM1040 417h2v2h-2zM1048 417h2v2h-2zM1062 417h1v2h-1zM1070 417h1v2h-1zM1078 417h3v2h-3zM1086 417h2v2h-2zM1095 417h2v2h-2zM1098 417h1v2h-1zM1100 417h1v2h-1zM1029 419h1v2h-1zM1032 419h2v2h-2zM1040 419h2v2h-2zM1048 419h2v2h-2zM1062 419h1v2h-1zM1069 419h1v2h-1zM1077 419h3v2h-3zM1085 419h2v2h-2zM1093 419h2v2h-2zM1096 419h1v2h-1zM1098 419h1v2h-1zM1029 421h1v2h-1zM1032 421h2v2h-2zM1040 421h2v2h-2zM1048 421h2v2h-2zM1062 421h1v2h-1zM1067 421h1v2h-1zM1075 421h3v2h-3zM1083 421h2v2h-2zM1089 421h2v2h-2zM1092 421h1v2h-1zM1094 421h1v2h-1zM1029 423h1v2h-1zM1032 423h2v2h-2zM1040 423h2v2h-2zM1048 423h2v2h-2zM1062 423h1v2h-1zM1073 423h1v2h-1zM1081 423h3v2h-3zM1089 423h2v2h-2zM1101 423h2v2h-2zM1104 423h1v2h-1zM1106 423h1v2h-1zM1025 425h2v2h-2zM1029 425h1v2h-1zM1021 427h2v2h-2zM1026 427h1v2h-1zM1017 429h2v2h-2zM1022 429h1v2h-1zM1013 431h2v2h-2zM1018 431h1v2h-1zM1009 433h2v2h-2zM1014 433h1v2h-1zM1009 435h2v2h-2zM1015 435h1v2h-1zM1009 437h2v2h-2zM1015 437h1v2h-1z"/><path fill="#d4d4d4" fill-opacity="0.50" d="M1021 57h1v2h-1zM1012 59h1v2h-1zM1016 59h2v2h-2zM1021 59h2v2h-2zM1011 61h2v2h-2zM1014 63h2v2h-2zM1017 63h1v2h-1zM1024 63h1v2h-1zM1026 63h3v2h-3zM1037 63h2v2h-2zM1040 63h1v2h-1zM1042 63h1v2h-1zM1045 63h1v2h-1zM1048 63h3v2h-3zM1052 63h2v2h-2zM1060 63h1v2h-1zM1063 63h1v2h-1zM1014 65h2v2h-2zM1017 65h1v2h-1zM1019 65h1v2h-1zM1021 65h4v2h-4zM1028 65h1v2h-1zM1015 67h1v2h-1zM1018 67h1v2h-1zM1021 67h1v2h-1zM1023 67h4v2h-4zM1029 67h1v2h-1zM1032 67h2v2h-2zM1043 67h1v2h-1zM1046 67h1v2h-1zM1014 69h2v2h-2zM1017 69h1v2h-1zM1019 69h4v2h-4zM1025 69h4v2h-4zM1030 69h2v2h-2zM1035 69h3v2h-3zM1039 69h2v2h-2zM1044 69h2v2h-2zM1051 69h5v2h-5zM1057 69h2v2h-2zM1064 69h3v2h-3zM1068 69h2v2h-2zM1072 69h3v2h-3zM1076 69h1v2h-1zM1083 69h7v2h-7zM1091 69h3v2h-3zM1095 69h1v2h-1zM1102 69h4v2h-4zM1107 69h3v2h-3zM1111 69h1v2h-1zM1114 69h1v2h-1zM1116 69h2v2h-2zM1120 69h1v2h-1zM1014 71h2v2h-2zM1017 71h1v2h-1zM1019 71h4v2h-4zM1025 71h2v2h-2zM1028 71h5v2h-5zM1035 71h3v2h-3zM1039 71h2v2h-2zM1044 71h3v2h-3zM1048 71h2v2h-2zM1051 71h1v2h-1zM1053 71h2v2h-2zM1056 71h5v2h-5zM1062 71h3v2h-3zM1066 71h2v2h-2zM1014 73h1v2h-1zM1018 73h1v2h-1zM1019 75h1v2h-1zM1018 77h1v2h-1zM1022 79h2v2h-2zM1026 79h4v2h-4zM1035 79h1v2h-1zM1022 81h2v2h-2zM1026 81h1v2h-1zM1030 81h2v2h-2zM1034 81h4v2h-4zM1039 81h1v2h-1zM1042 81h2v2h-2zM1022 83h2v2h-2zM1022 85h2v2h-2zM1027 85h3v2h-3zM1034 85h1v2h-1zM1036 85h1v2h-1zM1038 85h2v2h-2zM1041 85h2v2h-2zM1047 85h2v2h-2zM1051 85h2v2h-2zM1055 85h1v2h-1zM1057 85h2v2h-2zM1060 85h2v2h-2zM1066 85h1v2h-1zM1070 85h1v2h-1zM1072 85h1v2h-1zM1074 85h1v2h-1zM1076 85h2v2h-2zM1082 85h1v2h-1zM1084 85h2v2h-2zM1094 85h1v2h-1zM1096 85h1v2h-1zM1098 85h1v2h-1zM1104 85h1v2h-1zM1107 85h2v2h-2zM1115 85h2v2h-2zM1118 85h1v2h-1zM1018 91h1v2h-1zM1021 93h3v2h-3zM1025 93h2v2h-2zM1022 95h1v2h-1zM1025 95h2v2h-2zM1022 97h2v2h-2zM1026 97h4v2h-4zM1032 97h2v2h-2zM1035 97h2v2h-2zM1040 97h1v2h-1zM1021 99h2v2h-2zM1024 99h2v2h-2zM1029 99h1v2h-1zM1022 101h2v2h-2zM1026 101h1v2h-1zM1032 101h2v2h-2zM1021 109h3v2h-3zM1025 109h2v2h-2zM1029 109h1v2h-1zM1021 117h3v2h-3zM1025 117h2v2h-2zM1029 117h1v2h-1zM1036 117h1v2h-1zM1022 119h2v2h-2zM1026 119h4v2h-4zM1033 119h2v2h-2zM1021 125h3v2h-3zM1026 125h1v2h-1zM1028 125h1v2h-1zM1021 127h3v2h-3zM1025 127h2v2h-2zM1029 127h1v2h-1zM1022 135h3v2h-3zM1027 135h2v2h-2zM1037 135h2v2h-2zM1021 137h3v2h-3zM1025 137h2v2h-2zM1029 137h1v2h-1zM1032 137h2v2h-2zM1039 137h2v2h-2zM1017 143h1v2h-1zM1022 145h3v2h-3zM1027 145h2v2h-2zM1037 145h2v2h-2zM1022 147h1v2h-1zM1025 147h2v2h-2zM1030 147h1v2h-1zM1038 147h1v2h-1zM1021 149h3v2h-3zM1025 149h2v2h-2zM1029 149h1v2h-1zM1032 149h2v2h-2zM1017 155h1v2h-1zM1021 155h1v2h-1zM1021 157h3v2h-3zM1025 157h2v2h-2zM1029 157h1v2h-1zM1032 157h2v2h-2zM1040 157h2v2h-2zM1017 163h1v2h-1zM1021 165h2v2h-2zM1024 165h2v2h-2zM1022 167h2v2h-2zM1027 167h5v2h-5zM1033 167h3v2h-3zM1038 167h4v2h-4zM1017 173h1v2h-1zM1020 173h4v2h-4zM1022 175h2v2h-2zM1027 175h5v2h-5zM1033 175h3v2h-3zM1038 175h2v2h-2zM1041 175h2v2h-2zM1044 175h3v2h-3zM1019 181h1v2h-1zM1021 183h2v2h-2zM1024 183h2v2h-2zM1019 189h1v2h-1zM1021 189h1v2h-1zM1024 189h2v2h-2zM1022 191h1v2h-1zM1025 191h2v2h-2zM1030 191h1v2h-1zM1037 191h1v2h-1zM1021 193h3v2h-3zM1025 193h2v2h-2zM1031 193h1v2h-1zM1022 195h2v2h-2zM1027 195h5v2h-5zM1033 195h3v2h-3zM1038 195h4v2h-4zM1017 201h2v2h-2zM1020 201h1v2h-1zM1021 203h2v2h-2zM1024 203h2v2h-2zM1029 203h1v2h-1zM1017 209h2v2h-2zM1020 209h1v2h-1zM1022 211h2v2h-2zM1026 211h1v2h-1zM1030 211h2v2h-2zM1033 211h3v2h-3zM1039 211h2v2h-2zM1021 213h2v2h-2zM1024 213h2v2h-2zM1022 215h1v2h-1zM1025 215h2v2h-2zM1034 215h1v2h-1zM1022 217h2v2h-2zM1026 217h4v2h-4zM1034 217h1v2h-1zM1022 219h2v2h-2zM1025 219h2v2h-2zM1028 219h2v2h-2zM1031 219h3v2h-3zM1038 219h1v2h-1zM1022 221h3v2h-3zM1027 221h2v2h-2zM1022 223h2v2h-2zM1027 223h3v2h-3zM1038 223h3v2h-3zM1043 223h1v2h-1zM1045 223h1v2h-1zM1047 223h2v2h-2zM1053 223h4v2h-4zM1058 223h2v2h-2zM1064 223h1v2h-1zM1066 223h3v2h-3zM1070 223h3v2h-3zM1075 223h3v2h-3zM1082 223h2v2h-2zM1085 223h1v2h-1zM1089 223h6v2h-6zM1097 223h5v2h-5zM1103 223h3v2h-3zM1022 225h2v2h-2zM1026 225h4v2h-4zM1035 225h2v2h-2zM1018 231h3v2h-3zM1022 231h5v2h-5zM1023 233h2v2h-2zM1027 233h3v2h-3zM1018 239h2v2h-2zM1021 239h1v2h-1zM1022 241h2v2h-2zM1026 241h4v2h-4zM1018 247h3v2h-3zM1022 247h1v2h-1zM1022 249h2v2h-2zM1026 249h4v2h-4zM1034 249h1v2h-1zM1018 255h3v2h-3zM1022 255h2v2h-2zM1022 257h1v2h-1zM1025 257h2v2h-2zM1033 257h1v2h-1zM1022 259h1v2h-1zM1025 259h2v2h-2zM1030 259h1v2h-1zM1035 259h2v2h-2zM1038 259h1v2h-1zM1043 259h1v2h-1zM1047 259h3v2h-3zM1051 259h2v2h-2zM1054 259h1v2h-1zM1056 259h4v2h-4zM1061 259h4v2h-4zM1068 259h1v2h-1zM1022 261h1v2h-1zM1025 261h2v2h-2zM1029 261h2v2h-2zM1036 261h2v2h-2zM1039 261h1v2h-1zM1044 261h1v2h-1zM1048 261h3v2h-3zM1052 261h2v2h-2zM1055 261h1v2h-1zM1057 261h4v2h-4zM1062 261h4v2h-4zM1068 261h2v2h-2zM1018 267h2v2h-2zM1021 267h2v2h-2zM1025 267h3v2h-3zM1029 267h2v2h-2zM1040 267h1v2h-1zM1022 269h2v2h-2zM1025 269h1v2h-1zM1026 271h2v2h-2zM1030 271h1v2h-1zM1036 271h2v2h-2zM1022 277h4v2h-4zM1027 279h2v2h-2zM1025 281h4v2h-4zM1031 281h2v2h-2zM1035 281h2v2h-2zM1038 281h1v2h-1zM1022 287h3v2h-3zM1026 287h1v2h-1zM1027 289h2v2h-2zM1025 291h4v2h-4zM1031 291h2v2h-2zM1035 291h2v2h-2zM1038 291h1v2h-1zM1018 299h2v2h-2zM1021 299h2v2h-2zM1025 299h3v2h-3zM1029 299h2v2h-2zM1040 299h1v2h-1zM1043 299h2v2h-2zM1048 299h3v2h-3zM1053 299h2v2h-2zM1064 299h1v2h-1zM1022 301h1v2h-1zM1026 303h2v2h-2zM1030 303h4v2h-4zM1036 303h2v2h-2zM1039 303h2v2h-2zM1044 303h1v2h-1zM1026 305h2v2h-2zM1030 305h4v2h-4zM1036 305h3v2h-3zM1040 305h1v2h-1zM1043 305h2v2h-2zM1051 305h2v2h-2zM1056 305h2v2h-2zM1060 305h4v2h-4zM1065 305h1v2h-1zM1070 305h2v2h-2zM1083 305h5v2h-5zM1090 305h2v2h-2zM1093 305h3v2h-3zM1099 305h1v2h-1zM1119 305h1v2h-1zM1026 307h2v2h-2zM1030 307h4v2h-4zM1037 307h3v2h-3zM1041 307h3v2h-3zM1046 307h3v2h-3zM1050 307h2v2h-2zM1054 307h1v2h-1zM1026 309h2v2h-2zM1030 309h4v2h-4zM1036 309h4v2h-4zM1042 309h5v2h-5zM1026 311h2v2h-2zM1030 311h4v2h-4zM1036 311h1v2h-1zM1039 311h2v2h-2zM1042 311h3v2h-3zM1049 311h3v2h-3zM1056 311h3v2h-3zM1022 317h3v2h-3zM1026 317h5v2h-5zM1026 319h2v2h-2zM1030 319h1v2h-1zM1036 319h2v2h-2zM1026 321h1v2h-1zM1029 321h2v2h-2zM1037 321h1v2h-1zM1025 323h1v2h-1zM1027 323h1v2h-1zM1029 323h1v2h-1zM1031 323h1v2h-1zM1033 323h3v2h-3zM1038 323h3v2h-3zM1042 323h2v2h-2zM1026 325h2v2h-2zM1029 325h1v2h-1zM1033 325h3v2h-3zM1037 325h2v2h-2zM1042 325h3v2h-3zM1046 325h2v2h-2zM1022 331h2v2h-2zM1025 331h1v2h-1zM1025 333h2v2h-2zM1036 333h1v2h-1zM1025 335h3v2h-3zM1029 335h2v2h-2zM1026 337h2v2h-2zM1037 337h1v2h-1zM1025 339h3v2h-3zM1030 339h2v2h-2zM1025 341h4v2h-4zM1031 341h2v2h-2zM1035 341h2v2h-2zM1038 341h1v2h-1zM1026 343h2v2h-2zM1029 343h1v2h-1zM1031 343h1v2h-1zM1033 343h2v2h-2zM1042 343h1v2h-1zM1048 343h1v2h-1zM1050 343h1v2h-1zM1053 343h1v2h-1zM1022 349h3v2h-3zM1026 349h1v2h-1zM1025 351h4v2h-4zM1031 351h2v2h-2zM1035 351h2v2h-2zM1038 351h1v2h-1zM1015 359h1v2h-1zM1019 359h1v2h-1zM1012 361h2v2h-2zM1011 363h1v2h-1zM1015 363h1v2h-1zM1017 363h3v2h-3zM1024 363h1v2h-1zM1011 365h2v2h-2zM1014 365h1v2h-1zM1018 365h3v2h-3zM1022 365h5v2h-5zM1015 367h2v2h-2zM1018 367h1v2h-1zM1022 367h2v2h-2zM1025 367h1v2h-1zM1019 369h2v2h-2zM1022 369h1v2h-1zM1026 369h4v2h-4zM1023 371h2v2h-2zM1026 371h1v2h-1zM1028 371h3v2h-3zM1033 371h3v2h-3zM1037 371h2v2h-2zM1030 373h1v2h-1zM1032 373h4v2h-4zM1030 375h2v2h-2zM1033 375h1v2h-1zM1036 375h2v2h-2zM1039 375h3v2h-3zM1043 375h1v2h-1zM1046 375h2v2h-2zM1051 375h2v2h-2zM1029 377h2v2h-2zM1032 377h2v2h-2zM1036 377h2v2h-2zM1039 377h2v2h-2zM1043 377h1v2h-1zM1048 377h1v2h-1zM1051 377h2v2h-2zM1054 377h1v2h-1zM1056 377h2v2h-2zM1059 377h2v2h-2zM1063 377h2v2h-2zM1068 377h2v2h-2zM1071 377h1v2h-1zM1075 377h2v2h-2zM1079 377h1v2h-1zM1081 377h1v2h-1zM1084 377h1v2h-1zM1086 377h1v2h-1zM1089 377h3v2h-3zM1093 377h1v2h-1zM1096 377h2v2h-2zM1100 377h3v2h-3zM1030 379h2v2h-2zM1033 379h1v2h-1zM1036 379h2v2h-2zM1040 379h1v2h-1zM1042 379h2v2h-2zM1047 379h2v2h-2zM1050 379h1v2h-1zM1054 379h1v2h-1zM1057 379h2v2h-2zM1062 379h3v2h-3zM1067 379h2v2h-2zM1070 379h2v2h-2zM1073 379h3v2h-3zM1080 379h1v2h-1zM1082 379h1v2h-1zM1084 379h2v2h-2zM1089 379h2v2h-2zM1093 379h2v2h-2zM1097 379h2v2h-2zM1102 379h3v2h-3zM1106 379h2v2h-2zM1109 379h1v2h-1zM1111 379h1v2h-1zM1030 381h3v2h-3zM1035 381h2v2h-2zM1041 381h2v2h-2zM1044 381h3v2h-3zM1048 381h2v2h-2zM1052 381h3v2h-3zM1058 381h2v2h-2zM1061 381h2v2h-2zM1066 381h4v2h-4zM1072 381h2v2h-2zM1076 381h3v2h-3zM1080 381h2v2h-2zM1032 383h2v2h-2zM1035 383h2v2h-2zM1038 383h3v2h-3zM1043 383h1v2h-1zM1046 383h2v2h-2zM1057 383h1v2h-1zM1059 383h1v2h-1zM1061 383h4v2h-4zM1067 383h3v2h-3zM1072 383h1v2h-1zM1074 383h1v2h-1zM1076 383h2v2h-2zM1080 383h2v2h-2zM1086 383h1v2h-1zM1088 383h9v2h-9zM1098 383h2v2h-2zM1103 383h1v2h-1zM1105 383h2v2h-2zM1029 385h1v2h-1zM1031 385h2v2h-2zM1035 385h2v2h-2zM1039 385h1v2h-1zM1042 385h1v2h-1zM1044 385h1v2h-1zM1046 385h4v2h-4zM1051 385h1v2h-1zM1053 385h2v2h-2zM1057 385h2v2h-2zM1060 385h4v2h-4zM1030 387h1v2h-1zM1033 387h2v2h-2zM1042 387h1v2h-1zM1047 387h5v2h-5zM1054 387h3v2h-3zM1059 387h3v2h-3zM1063 387h3v2h-3zM1069 387h2v2h-2zM1072 387h1v2h-1zM1079 387h2v2h-2zM1085 387h5v2h-5zM1093 387h1v2h-1zM1029 389h2v2h-2zM1034 389h1v2h-1zM1037 389h2v2h-2zM1046 389h1v2h-1zM1050 389h3v2h-3zM1055 389h3v2h-3zM1059 389h1v2h-1zM1061 389h2v2h-2zM1064 389h3v2h-3zM1068 389h2v2h-2zM1071 389h1v2h-1zM1073 389h3v2h-3zM1080 389h2v2h-2zM1083 389h1v2h-1zM1090 389h2v2h-2zM1097 389h2v2h-2zM1102 389h2v2h-2zM1105 389h2v2h-2zM1108 389h1v2h-1zM1111 389h1v2h-1zM1031 391h1v2h-1zM1034 391h2v2h-2zM1039 391h7v2h-7zM1049 391h2v2h-2zM1053 391h1v2h-1zM1057 391h1v2h-1zM1060 391h4v2h-4zM1068 391h4v2h-4zM1077 391h2v2h-2zM1082 391h1v2h-1zM1086 391h1v2h-1zM1090 391h2v2h-2zM1094 391h1v2h-1zM1026 393h1v2h-1zM1028 393h2v2h-2zM1031 393h1v2h-1zM1033 393h3v2h-3zM1039 393h1v2h-1zM1043 393h1v2h-1zM1046 393h2v2h-2zM1054 393h1v2h-1zM1057 393h1v2h-1zM1062 393h2v2h-2zM1066 393h3v2h-3zM1078 393h1v2h-1zM1081 393h1v2h-1zM1084 393h3v2h-3zM1088 393h3v2h-3zM1092 393h2v2h-2zM1097 393h3v2h-3zM1103 393h1v2h-1zM1107 393h1v2h-1zM1109 393h2v2h-2zM1024 395h2v2h-2zM1020 397h2v2h-2zM1019 399h2v2h-2zM1022 399h1v2h-1zM1026 399h3v2h-3zM1030 399h1v2h-1zM1023 401h2v2h-2zM1026 401h1v2h-1zM1028 401h3v2h-3zM1033 401h3v2h-3zM1037 401h2v2h-2zM1030 403h1v2h-1zM1032 403h1v2h-1zM1034 403h2v2h-2zM1038 403h8v2h-8zM1026 405h1v2h-1zM1031 407h1v2h-1zM1034 407h1v2h-1zM1037 407h2v2h-2zM1046 407h1v2h-1zM1050 407h3v2h-3zM1055 407h3v2h-3zM1059 407h3v2h-3zM1064 407h3v2h-3zM1069 407h1v2h-1zM1072 407h2v2h-2zM1076 407h1v2h-1zM1078 407h2v2h-2zM1081 407h1v2h-1zM1086 407h2v2h-2zM1089 407h1v2h-1zM1096 407h2v2h-2zM1102 407h6v2h-6zM1109 407h1v2h-1zM1111 407h3v2h-3zM1116 407h1v2h-1zM1120 407h1v2h-1zM1031 409h1v2h-1zM1034 409h1v2h-1zM1037 409h2v2h-2zM1046 409h1v2h-1zM1050 409h3v2h-3zM1055 409h3v2h-3zM1059 409h3v2h-3zM1064 409h3v2h-3zM1068 409h1v2h-1zM1071 409h1v2h-1zM1074 409h3v2h-3zM1080 409h2v2h-2zM1083 409h1v2h-1zM1090 409h2v2h-2zM1096 409h3v2h-3zM1100 409h1v2h-1zM1103 409h1v2h-1zM1106 409h3v2h-3zM1111 409h1v2h-1zM1115 409h1v2h-1zM1117 409h2v2h-2zM1031 411h1v2h-1zM1034 411h1v2h-1zM1037 411h2v2h-2zM1046 411h1v2h-1zM1050 411h3v2h-3zM1055 411h3v2h-3zM1059 411h3v2h-3zM1063 411h7v2h-7zM1075 411h2v2h-2zM1078 411h1v2h-1zM1085 411h2v2h-2zM1091 411h6v2h-6zM1101 411h1v2h-1zM1105 411h1v2h-1zM1107 411h2v2h-2zM1113 411h5v2h-5zM1031 413h1v2h-1zM1034 413h1v2h-1zM1037 413h2v2h-2zM1046 413h1v2h-1zM1052 413h1v2h-1zM1054 413h3v2h-3zM1058 413h3v2h-3zM1063 413h3v2h-3zM1067 413h3v2h-3zM1073 413h2v2h-2zM1076 413h1v2h-1zM1083 413h2v2h-2zM1090 413h1v2h-1zM1092 413h2v2h-2zM1097 413h3v2h-3zM1102 413h1v2h-1zM1106 413h1v2h-1zM1108 413h2v2h-2zM1117 413h4v2h-4zM1031 415h1v2h-1zM1034 415h1v2h-1zM1037 415h2v2h-2zM1046 415h1v2h-1zM1050 415h3v2h-3zM1055 415h3v2h-3zM1059 415h3v2h-3zM1064 415h2v2h-2zM1067 415h4v2h-4zM1074 415h2v2h-2zM1077 415h1v2h-1zM1084 415h2v2h-2zM1090 415h2v2h-2zM1093 415h4v2h-4zM1099 415h1v2h-1zM1103 415h1v2h-1zM1105 415h2v2h-2zM1111 415h3v2h-3zM1115 415h1v2h-1zM1118 415h3v2h-3zM1031 417h1v2h-1zM1034 417h1v2h-1zM1037 417h2v2h-2zM1046 417h1v2h-1zM1050 417h3v2h-3zM1055 417h3v2h-3zM1059 417h3v2h-3zM1063 417h2v2h-2zM1067 417h2v2h-2zM1073 417h2v2h-2zM1076 417h1v2h-1zM1083 417h2v2h-2zM1089 417h1v2h-1zM1092 417h2v2h-2zM1097 417h1v2h-1zM1101 417h1v2h-1zM1103 417h2v2h-2zM1109 417h1v2h-1zM1113 417h1v2h-1zM1118 417h3v2h-3zM1031 419h1v2h-1zM1034 419h1v2h-1zM1037 419h2v2h-2zM1046 419h1v2h-1zM1050 419h3v2h-3zM1055 419h3v2h-3zM1059 419h3v2h-3zM1063 419h4v2h-4zM1068 419h1v2h-1zM1072 419h2v2h-2zM1075 419h1v2h-1zM1082 419h2v2h-2zM1088 419h3v2h-3zM1092 419h1v2h-1zM1095 419h1v2h-1zM1099 419h1v2h-1zM1101 419h2v2h-2zM1107 419h1v2h-1zM1114 419h2v2h-2zM1118 419h1v2h-1zM1031 421h1v2h-1zM1034 421h1v2h-1zM1037 421h2v2h-2zM1046 421h1v2h-1zM1050 421h3v2h-3zM1055 421h3v2h-3zM1059 421h3v2h-3zM1065 421h1v2h-1zM1070 421h2v2h-2zM1073 421h1v2h-1zM1080 421h2v2h-2zM1087 421h1v2h-1zM1091 421h1v2h-1zM1095 421h1v2h-1zM1097 421h2v2h-2zM1103 421h3v2h-3zM1107 421h2v2h-2zM1112 421h2v2h-2zM1115 421h2v2h-2zM1119 421h1v2h-1zM1031 423h1v2h-1zM1034 423h1v2h-1zM1037 423h2v2h-2zM1046 423h1v2h-1zM1050 423h3v2h-3zM1055 423h3v2h-3zM1059 423h3v2h-3zM1063 423h4v2h-4zM1068 423h1v2h-1zM1071 423h2v2h-2zM1076 423h2v2h-2zM1079 423h1v2h-1zM1086 423h2v2h-2zM1092 423h3v2h-3zM1096 423h1v2h-1zM1099 423h2v2h-2zM1103 423h1v2h-1zM1107 423h1v2h-1zM1109 423h2v2h-2zM1116 423h1v2h-1zM1119 423h2v2h-2zM1027 425h1v2h-1zM1024 427h2v2h-2zM1020 429h2v2h-2zM1016 431h2v2h-2zM1012 433h2v2h-2zM1012 435h1v2h-1zM1013 437h1v2h-1z"/><path fill="#d4d4d4" fill-opacity="0.60" d="M1011 57h7v2h-7zM1019 57h2v2h-2zM1022 57h1v2h-1zM1010 59h2v2h-2zM1013 59h1v2h-1zM1015 59h1v2h-1zM1018 59h1v2h-1zM1024 59h2v2h-2zM1010 61h1v2h-1zM1013 61h1v2h-1zM1016 63h1v2h-1zM1019 63h4v2h-4zM1025 63h1v2h-1zM1031 63h1v2h-1zM1033 63h2v2h-2zM1036 63h1v2h-1zM1039 63h1v2h-1zM1041 63h1v2h-1zM1043 63h2v2h-2zM1051 63h1v2h-1zM1054 63h1v2h-1zM1057 63h2v2h-2zM1061 63h2v2h-2zM1016 65h1v2h-1zM1020 65h1v2h-1zM1025 65h1v2h-1zM1029 65h2v2h-2zM1032 65h1v2h-1zM1014 67h1v2h-1zM1016 67h2v2h-2zM1020 67h1v2h-1zM1022 67h1v2h-1zM1028 67h1v2h-1zM1031 67h1v2h-1zM1034 67h2v2h-2zM1037 67h3v2h-3zM1042 67h1v2h-1zM1044 67h2v2h-2zM1016 69h1v2h-1zM1029 69h1v2h-1zM1032 69h1v2h-1zM1038 69h1v2h-1zM1041 69h1v2h-1zM1046 69h3v2h-3zM1050 69h1v2h-1zM1059 69h3v2h-3zM1067 69h1v2h-1zM1070 69h1v2h-1zM1075 69h1v2h-1zM1078 69h1v2h-1zM1080 69h1v2h-1zM1094 69h1v2h-1zM1097 69h1v2h-1zM1099 69h1v2h-1zM1110 69h1v2h-1zM1112 69h2v2h-2zM1016 71h1v2h-1zM1027 71h1v2h-1zM1038 71h1v2h-1zM1041 71h1v2h-1zM1047 71h1v2h-1zM1052 71h1v2h-1zM1065 71h1v2h-1zM1015 73h3v2h-3zM1017 75h2v2h-2zM1020 75h1v2h-1zM1017 77h1v2h-1zM1019 77h2v2h-2zM1021 79h1v2h-1zM1024 79h1v2h-1zM1032 79h3v2h-3zM1024 81h2v2h-2zM1027 81h1v2h-1zM1029 81h1v2h-1zM1032 81h1v2h-1zM1040 81h2v2h-2zM1044 81h1v2h-1zM1047 81h3v2h-3zM1021 83h1v2h-1zM1024 83h3v2h-3zM1029 83h3v2h-3zM1021 85h1v2h-1zM1024 85h1v2h-1zM1026 85h1v2h-1zM1030 85h2v2h-2zM1035 85h1v2h-1zM1037 85h1v2h-1zM1045 85h2v2h-2zM1049 85h2v2h-2zM1053 85h2v2h-2zM1056 85h1v2h-1zM1059 85h1v2h-1zM1062 85h1v2h-1zM1067 85h3v2h-3zM1073 85h1v2h-1zM1075 85h1v2h-1zM1081 85h1v2h-1zM1083 85h1v2h-1zM1087 85h2v2h-2zM1093 85h1v2h-1zM1095 85h1v2h-1zM1097 85h1v2h-1zM1103 85h1v2h-1zM1105 85h2v2h-2zM1113 85h2v2h-2zM1117 85h1v2h-1zM1017 91h1v2h-1zM1019 91h2v2h-2zM1024 93h1v2h-1zM1029 93h1v2h-1zM1021 95h1v2h-1zM1023 95h2v2h-2zM1027 95h1v2h-1zM1030 95h1v2h-1zM1021 97h1v2h-1zM1024 97h2v2h-2zM1030 97h1v2h-1zM1034 97h1v2h-1zM1039 97h1v2h-1zM1041 97h1v2h-1zM1043 97h3v2h-3zM1048 97h2v2h-2zM1053 97h2v2h-2zM1023 99h1v2h-1zM1028 99h1v2h-1zM1030 99h1v2h-1zM1032 99h3v2h-3zM1037 99h2v2h-2zM1042 99h2v2h-2zM1021 101h1v2h-1zM1024 101h2v2h-2zM1027 101h1v2h-1zM1030 101h2v2h-2zM1017 107h2v2h-2zM1024 109h1v2h-1zM1028 109h1v2h-1zM1030 109h1v2h-1zM1033 109h1v2h-1zM1017 115h2v2h-2zM1024 117h1v2h-1zM1028 117h1v2h-1zM1030 117h1v2h-1zM1033 117h3v2h-3zM1021 119h1v2h-1zM1024 119h1v2h-1zM1032 119h1v2h-1zM1017 125h2v2h-2zM1020 125h1v2h-1zM1024 125h1v2h-1zM1027 125h1v2h-1zM1029 125h2v2h-2zM1024 127h1v2h-1zM1028 127h1v2h-1zM1030 127h1v2h-1zM1033 127h1v2h-1zM1017 133h1v2h-1zM1021 135h1v2h-1zM1026 135h1v2h-1zM1029 135h3v2h-3zM1034 135h1v2h-1zM1036 135h1v2h-1zM1024 137h1v2h-1zM1028 137h1v2h-1zM1030 137h2v2h-2zM1036 137h1v2h-1zM1038 137h1v2h-1zM1018 143h1v2h-1zM1021 145h1v2h-1zM1026 145h1v2h-1zM1029 145h3v2h-3zM1034 145h1v2h-1zM1036 145h1v2h-1zM1021 147h1v2h-1zM1023 147h2v2h-2zM1027 147h1v2h-1zM1029 147h1v2h-1zM1031 147h2v2h-2zM1035 147h3v2h-3zM1024 149h1v2h-1zM1028 149h1v2h-1zM1030 149h2v2h-2zM1036 149h1v2h-1zM1018 155h1v2h-1zM1020 155h1v2h-1zM1024 157h1v2h-1zM1028 157h1v2h-1zM1030 157h2v2h-2zM1036 157h1v2h-1zM1038 157h2v2h-2zM1023 165h1v2h-1zM1029 165h6v2h-6zM1021 167h1v2h-1zM1024 167h1v2h-1zM1026 167h1v2h-1zM1032 167h1v2h-1zM1019 173h1v2h-1zM1021 175h1v2h-1zM1024 175h1v2h-1zM1026 175h1v2h-1zM1032 175h1v2h-1zM1040 175h1v2h-1zM1043 175h1v2h-1zM1018 181h1v2h-1zM1023 183h1v2h-1zM1029 183h6v2h-6zM1018 189h1v2h-1zM1022 189h2v2h-2zM1021 191h1v2h-1zM1023 191h2v2h-2zM1027 191h1v2h-1zM1029 191h1v2h-1zM1031 191h2v2h-2zM1035 191h2v2h-2zM1024 193h1v2h-1zM1027 193h1v2h-1zM1021 195h1v2h-1zM1024 195h1v2h-1zM1026 195h1v2h-1zM1032 195h1v2h-1zM1019 201h1v2h-1zM1023 203h1v2h-1zM1028 203h1v2h-1zM1030 203h1v2h-1zM1032 203h3v2h-3zM1037 203h2v2h-2zM1042 203h2v2h-2zM1019 209h1v2h-1zM1021 211h1v2h-1zM1024 211h2v2h-2zM1027 211h1v2h-1zM1032 211h1v2h-1zM1037 211h2v2h-2zM1041 211h1v2h-1zM1023 213h1v2h-1zM1029 213h6v2h-6zM1021 215h1v2h-1zM1023 215h2v2h-2zM1027 215h1v2h-1zM1030 215h1v2h-1zM1032 215h2v2h-2zM1021 217h1v2h-1zM1024 217h2v2h-2zM1030 217h1v2h-1zM1033 217h1v2h-1zM1035 217h1v2h-1zM1037 217h3v2h-3zM1042 217h2v2h-2zM1047 217h2v2h-2zM1021 219h1v2h-1zM1024 219h1v2h-1zM1030 219h1v2h-1zM1036 219h2v2h-2zM1021 221h1v2h-1zM1026 221h1v2h-1zM1029 221h3v2h-3zM1034 221h1v2h-1zM1036 221h1v2h-1zM1021 223h1v2h-1zM1024 223h1v2h-1zM1026 223h1v2h-1zM1030 223h2v2h-2zM1035 223h3v2h-3zM1042 223h1v2h-1zM1044 223h1v2h-1zM1046 223h1v2h-1zM1052 223h1v2h-1zM1057 223h1v2h-1zM1063 223h1v2h-1zM1065 223h1v2h-1zM1069 223h1v2h-1zM1074 223h1v2h-1zM1081 223h1v2h-1zM1084 223h1v2h-1zM1088 223h1v2h-1zM1102 223h1v2h-1zM1021 225h1v2h-1zM1024 225h1v2h-1zM1032 225h1v2h-1zM1034 225h1v2h-1zM1021 231h1v2h-1zM1021 233h2v2h-2zM1026 233h1v2h-1zM1032 233h1v2h-1zM1020 239h1v2h-1zM1022 239h1v2h-1zM1021 241h1v2h-1zM1024 241h2v2h-2zM1030 241h1v2h-1zM1034 241h3v2h-3zM1021 247h1v2h-1zM1021 249h1v2h-1zM1024 249h2v2h-2zM1030 249h1v2h-1zM1033 249h1v2h-1zM1035 249h1v2h-1zM1037 249h3v2h-3zM1042 249h2v2h-2zM1047 249h2v2h-2zM1021 255h1v2h-1zM1024 255h1v2h-1zM1021 257h1v2h-1zM1023 257h2v2h-2zM1027 257h1v2h-1zM1030 257h3v2h-3zM1021 259h1v2h-1zM1023 259h2v2h-2zM1027 259h1v2h-1zM1029 259h1v2h-1zM1031 259h2v2h-2zM1037 259h1v2h-1zM1040 259h3v2h-3zM1053 259h1v2h-1zM1065 259h1v2h-1zM1067 259h1v2h-1zM1069 259h2v2h-2zM1021 261h1v2h-1zM1023 261h2v2h-2zM1027 261h1v2h-1zM1031 261h3v2h-3zM1038 261h1v2h-1zM1041 261h3v2h-3zM1054 261h1v2h-1zM1066 261h1v2h-1zM1070 261h3v2h-3zM1020 267h1v2h-1zM1031 267h3v2h-3zM1036 267h4v2h-4zM1024 269h1v2h-1zM1026 269h1v2h-1zM1025 271h1v2h-1zM1028 271h2v2h-2zM1031 271h1v2h-1zM1034 271h2v2h-2zM1025 279h2v2h-2zM1031 279h1v2h-1zM1033 279h1v2h-1zM1035 279h1v2h-1zM1029 281h2v2h-2zM1037 281h1v2h-1zM1025 287h1v2h-1zM1025 289h2v2h-2zM1031 289h1v2h-1zM1033 289h1v2h-1zM1035 289h1v2h-1zM1029 291h2v2h-2zM1037 291h1v2h-1zM1020 299h1v2h-1zM1031 299h3v2h-3zM1036 299h4v2h-4zM1045 299h1v2h-1zM1052 299h1v2h-1zM1055 299h3v2h-3zM1060 299h4v2h-4zM1021 301h1v2h-1zM1023 301h2v2h-2zM1025 303h1v2h-1zM1028 303h2v2h-2zM1034 303h1v2h-1zM1038 303h1v2h-1zM1043 303h1v2h-1zM1045 303h1v2h-1zM1047 303h3v2h-3zM1052 303h2v2h-2zM1057 303h2v2h-2zM1025 305h1v2h-1zM1028 305h2v2h-2zM1034 305h1v2h-1zM1039 305h1v2h-1zM1045 305h1v2h-1zM1053 305h1v2h-1zM1058 305h1v2h-1zM1064 305h1v2h-1zM1067 305h2v2h-2zM1072 305h1v2h-1zM1082 305h1v2h-1zM1089 305h1v2h-1zM1092 305h1v2h-1zM1096 305h1v2h-1zM1098 305h1v2h-1zM1100 305h1v2h-1zM1102 305h3v2h-3zM1107 305h2v2h-2zM1112 305h2v2h-2zM1118 305h1v2h-1zM1120 305h1v2h-1zM1025 307h1v2h-1zM1028 307h2v2h-2zM1034 307h1v2h-1zM1036 307h1v2h-1zM1040 307h1v2h-1zM1049 307h1v2h-1zM1053 307h1v2h-1zM1055 307h1v2h-1zM1025 309h1v2h-1zM1028 309h2v2h-2zM1034 309h1v2h-1zM1025 311h1v2h-1zM1028 311h2v2h-2zM1034 311h1v2h-1zM1037 311h2v2h-2zM1041 311h1v2h-1zM1045 311h1v2h-1zM1048 311h1v2h-1zM1052 311h1v2h-1zM1055 311h1v2h-1zM1059 311h1v2h-1zM1025 317h1v2h-1zM1025 319h1v2h-1zM1028 319h2v2h-2zM1031 319h1v2h-1zM1034 319h2v2h-2zM1025 321h1v2h-1zM1027 321h2v2h-2zM1031 321h1v2h-1zM1034 321h3v2h-3zM1026 323h1v2h-1zM1028 323h1v2h-1zM1032 323h1v2h-1zM1041 323h1v2h-1zM1025 325h1v2h-1zM1028 325h1v2h-1zM1030 325h2v2h-2zM1036 325h1v2h-1zM1039 325h1v2h-1zM1045 325h1v2h-1zM1024 331h1v2h-1zM1026 331h1v2h-1zM1027 333h3v2h-3zM1032 333h4v2h-4zM1031 335h3v2h-3zM1036 335h3v2h-3zM1025 337h1v2h-1zM1028 337h3v2h-3zM1033 337h4v2h-4zM1029 339h1v2h-1zM1032 339h3v2h-3zM1037 339h3v2h-3zM1029 341h2v2h-2zM1037 341h1v2h-1zM1025 343h1v2h-1zM1030 343h1v2h-1zM1032 343h1v2h-1zM1037 343h1v2h-1zM1039 343h3v2h-3zM1044 343h4v2h-4zM1051 343h2v2h-2zM1055 343h1v2h-1zM1058 343h1v2h-1zM1061 343h1v2h-1zM1064 343h1v2h-1zM1066 343h1v2h-1zM1025 349h1v2h-1zM1029 351h2v2h-2zM1037 351h1v2h-1zM1016 359h3v2h-3zM1011 361h1v2h-1zM1014 361h1v2h-1zM1010 363h1v2h-1zM1012 363h2v2h-2zM1016 363h1v2h-1zM1022 363h2v2h-2zM1010 365h1v2h-1zM1015 365h1v2h-1zM1021 365h1v2h-1zM1014 367h1v2h-1zM1019 367h1v2h-1zM1024 367h1v2h-1zM1026 367h1v2h-1zM1018 369h1v2h-1zM1023 369h1v2h-1zM1022 371h1v2h-1zM1027 371h1v2h-1zM1036 371h1v2h-1zM1039 371h1v2h-1zM1026 373h2v2h-2zM1029 373h1v2h-1zM1031 373h1v2h-1zM1038 373h2v2h-2zM1026 375h1v2h-1zM1028 375h2v2h-2zM1032 375h1v2h-1zM1035 375h1v2h-1zM1042 375h1v2h-1zM1044 375h2v2h-2zM1048 375h1v2h-1zM1050 375h1v2h-1zM1053 375h2v2h-2zM1056 375h3v2h-3zM1062 375h1v2h-1zM1026 377h1v2h-1zM1028 377h1v2h-1zM1035 377h1v2h-1zM1038 377h1v2h-1zM1041 377h1v2h-1zM1044 377h1v2h-1zM1046 377h2v2h-2zM1053 377h1v2h-1zM1058 377h1v2h-1zM1062 377h1v2h-1zM1065 377h1v2h-1zM1070 377h1v2h-1zM1074 377h1v2h-1zM1077 377h2v2h-2zM1080 377h1v2h-1zM1083 377h1v2h-1zM1085 377h1v2h-1zM1088 377h1v2h-1zM1092 377h1v2h-1zM1094 377h1v2h-1zM1099 377h1v2h-1zM1032 379h1v2h-1zM1035 379h1v2h-1zM1038 379h2v2h-2zM1041 379h1v2h-1zM1049 379h1v2h-1zM1053 379h1v2h-1zM1055 379h2v2h-2zM1061 379h1v2h-1zM1066 379h1v2h-1zM1076 379h2v2h-2zM1079 379h1v2h-1zM1083 379h1v2h-1zM1086 379h1v2h-1zM1088 379h1v2h-1zM1091 379h2v2h-2zM1095 379h1v2h-1zM1099 379h1v2h-1zM1101 379h1v2h-1zM1108 379h1v2h-1zM1029 381h1v2h-1zM1033 381h1v2h-1zM1037 381h1v2h-1zM1040 381h1v2h-1zM1050 381h2v2h-2zM1056 381h2v2h-2zM1063 381h2v2h-2zM1070 381h2v2h-2zM1074 381h1v2h-1zM1079 381h1v2h-1zM1085 381h1v2h-1zM1026 383h1v2h-1zM1028 383h2v2h-2zM1031 383h1v2h-1zM1042 383h1v2h-1zM1045 383h1v2h-1zM1048 383h2v2h-2zM1051 383h3v2h-3zM1056 383h1v2h-1zM1058 383h1v2h-1zM1066 383h1v2h-1zM1071 383h1v2h-1zM1075 383h1v2h-1zM1078 383h1v2h-1zM1082 383h1v2h-1zM1084 383h2v2h-2zM1101 383h2v2h-2zM1107 383h3v2h-3zM1030 385h1v2h-1zM1034 385h1v2h-1zM1038 385h1v2h-1zM1040 385h1v2h-1zM1045 385h1v2h-1zM1052 385h1v2h-1zM1055 385h1v2h-1zM1059 385h1v2h-1zM1064 385h3v2h-3zM1032 387h1v2h-1zM1035 387h1v2h-1zM1038 387h4v2h-4zM1046 387h1v2h-1zM1052 387h1v2h-1zM1057 387h2v2h-2zM1068 387h1v2h-1zM1071 387h1v2h-1zM1073 387h1v2h-1zM1077 387h2v2h-2zM1081 387h1v2h-1zM1084 387h1v2h-1zM1090 387h1v2h-1zM1031 389h1v2h-1zM1036 389h1v2h-1zM1039 389h1v2h-1zM1042 389h4v2h-4zM1053 389h2v2h-2zM1060 389h1v2h-1zM1063 389h1v2h-1zM1067 389h1v2h-1zM1070 389h1v2h-1zM1079 389h1v2h-1zM1082 389h1v2h-1zM1084 389h1v2h-1zM1088 389h2v2h-2zM1092 389h1v2h-1zM1095 389h2v2h-2zM1099 389h1v2h-1zM1101 389h1v2h-1zM1104 389h1v2h-1zM1107 389h1v2h-1zM1029 391h2v2h-2zM1033 391h1v2h-1zM1036 391h2v2h-2zM1046 391h2v2h-2zM1052 391h1v2h-1zM1054 391h2v2h-2zM1058 391h1v2h-1zM1064 391h1v2h-1zM1067 391h1v2h-1zM1072 391h3v2h-3zM1079 391h1v2h-1zM1081 391h1v2h-1zM1083 391h3v2h-3zM1087 391h1v2h-1zM1089 391h1v2h-1zM1092 391h2v2h-2zM1098 391h1v2h-1zM1027 393h1v2h-1zM1032 393h1v2h-1zM1038 393h1v2h-1zM1045 393h1v2h-1zM1048 393h1v2h-1zM1055 393h2v2h-2zM1058 393h1v2h-1zM1061 393h1v2h-1zM1064 393h2v2h-2zM1069 393h1v2h-1zM1077 393h1v2h-1zM1080 393h1v2h-1zM1083 393h1v2h-1zM1091 393h1v2h-1zM1094 393h1v2h-1zM1096 393h1v2h-1zM1100 393h1v2h-1zM1108 393h1v2h-1zM1023 395h1v2h-1zM1019 397h1v2h-1zM1018 399h1v2h-1zM1023 399h1v2h-1zM1029 399h1v2h-1zM1022 401h1v2h-1zM1027 401h1v2h-1zM1036 401h1v2h-1zM1039 401h1v2h-1zM1026 403h2v2h-2zM1029 403h1v2h-1zM1031 403h1v2h-1zM1033 403h1v2h-1zM1037 403h1v2h-1zM1048 403h2v2h-2zM1027 405h1v2h-1zM1030 407h1v2h-1zM1036 407h1v2h-1zM1039 407h1v2h-1zM1042 407h4v2h-4zM1053 407h2v2h-2zM1063 407h1v2h-1zM1068 407h1v2h-1zM1070 407h2v2h-2zM1074 407h1v2h-1zM1077 407h1v2h-1zM1080 407h1v2h-1zM1082 407h1v2h-1zM1085 407h1v2h-1zM1088 407h1v2h-1zM1090 407h1v2h-1zM1094 407h2v2h-2zM1098 407h1v2h-1zM1101 407h1v2h-1zM1108 407h1v2h-1zM1110 407h1v2h-1zM1030 409h1v2h-1zM1036 409h1v2h-1zM1039 409h1v2h-1zM1042 409h4v2h-4zM1053 409h2v2h-2zM1063 409h1v2h-1zM1067 409h1v2h-1zM1069 409h2v2h-2zM1073 409h1v2h-1zM1079 409h1v2h-1zM1082 409h1v2h-1zM1084 409h1v2h-1zM1088 409h2v2h-2zM1092 409h1v2h-1zM1095 409h1v2h-1zM1099 409h1v2h-1zM1101 409h2v2h-2zM1105 409h1v2h-1zM1116 409h1v2h-1zM1119 409h1v2h-1zM1030 411h1v2h-1zM1036 411h1v2h-1zM1039 411h1v2h-1zM1042 411h4v2h-4zM1053 411h2v2h-2zM1070 411h2v2h-2zM1074 411h1v2h-1zM1077 411h1v2h-1zM1079 411h1v2h-1zM1083 411h2v2h-2zM1087 411h1v2h-1zM1090 411h1v2h-1zM1097 411h2v2h-2zM1106 411h1v2h-1zM1109 411h1v2h-1zM1112 411h1v2h-1zM1118 411h1v2h-1zM1030 413h1v2h-1zM1036 413h1v2h-1zM1039 413h1v2h-1zM1042 413h4v2h-4zM1050 413h2v2h-2zM1053 413h1v2h-1zM1061 413h2v2h-2zM1072 413h1v2h-1zM1075 413h1v2h-1zM1077 413h1v2h-1zM1081 413h2v2h-2zM1085 413h1v2h-1zM1088 413h2v2h-2zM1091 413h1v2h-1zM1095 413h2v2h-2zM1107 413h1v2h-1zM1110 413h1v2h-1zM1113 413h3v2h-3zM1030 415h1v2h-1zM1036 415h1v2h-1zM1039 415h1v2h-1zM1042 415h4v2h-4zM1053 415h2v2h-2zM1063 415h1v2h-1zM1066 415h1v2h-1zM1073 415h1v2h-1zM1076 415h1v2h-1zM1078 415h1v2h-1zM1082 415h2v2h-2zM1086 415h1v2h-1zM1089 415h1v2h-1zM1092 415h1v2h-1zM1104 415h1v2h-1zM1107 415h1v2h-1zM1110 415h1v2h-1zM1117 415h1v2h-1zM1030 417h1v2h-1zM1036 417h1v2h-1zM1039 417h1v2h-1zM1042 417h4v2h-4zM1053 417h2v2h-2zM1065 417h2v2h-2zM1069 417h1v2h-1zM1072 417h1v2h-1zM1075 417h1v2h-1zM1077 417h1v2h-1zM1081 417h2v2h-2zM1085 417h1v2h-1zM1088 417h1v2h-1zM1090 417h2v2h-2zM1094 417h1v2h-1zM1102 417h1v2h-1zM1105 417h1v2h-1zM1108 417h1v2h-1zM1110 417h1v2h-1zM1112 417h1v2h-1zM1114 417h2v2h-2zM1117 417h1v2h-1zM1030 419h1v2h-1zM1036 419h1v2h-1zM1039 419h1v2h-1zM1042 419h4v2h-4zM1053 419h2v2h-2zM1067 419h1v2h-1zM1071 419h1v2h-1zM1074 419h1v2h-1zM1076 419h1v2h-1zM1080 419h2v2h-2zM1084 419h1v2h-1zM1087 419h1v2h-1zM1091 419h1v2h-1zM1100 419h1v2h-1zM1103 419h1v2h-1zM1106 419h1v2h-1zM1108 419h1v2h-1zM1110 419h3v2h-3zM1116 419h1v2h-1zM1119 419h2v2h-2zM1030 421h1v2h-1zM1036 421h1v2h-1zM1039 421h1v2h-1zM1042 421h4v2h-4zM1053 421h2v2h-2zM1063 421h2v2h-2zM1066 421h1v2h-1zM1069 421h1v2h-1zM1072 421h1v2h-1zM1074 421h1v2h-1zM1078 421h2v2h-2zM1082 421h1v2h-1zM1085 421h2v2h-2zM1088 421h1v2h-1zM1096 421h1v2h-1zM1099 421h1v2h-1zM1102 421h1v2h-1zM1109 421h1v2h-1zM1111 421h1v2h-1zM1114 421h1v2h-1zM1117 421h1v2h-1zM1120 421h1v2h-1zM1030 423h1v2h-1zM1036 423h1v2h-1zM1039 423h1v2h-1zM1042 423h4v2h-4zM1053 423h2v2h-2zM1067 423h1v2h-1zM1069 423h2v2h-2zM1075 423h1v2h-1zM1078 423h1v2h-1zM1080 423h1v2h-1zM1084 423h2v2h-2zM1088 423h1v2h-1zM1091 423h1v2h-1zM1095 423h1v2h-1zM1097 423h2v2h-2zM1108 423h1v2h-1zM1111 423h1v2h-1zM1114 423h2v2h-2zM1117 423h1v2h-1zM1028 425h1v2h-1zM1023 427h1v2h-1zM1019 429h1v2h-1zM1015 431h1v2h-1zM1011 433h1v2h-1zM1011 435h1v2h-1zM1013 435h2v2h-2zM1011 437h2v2h-2zM1014 437h1v2h-1z"/></svg><div class="a" style="left:1009px;top:57px;width:112px;height:382px;background:repeating-linear-gradient(to bottom,rgba(30,30,30,0) 0 1px,rgba(30,30,30,0.5) 1px 2px)"></div><div class="a" style="left:995px;top:57px;width:6px;height:761px;background:linear-gradient(to right,rgba(0,0,0,0),rgba(0,0,0,0.35))"></div><div class="a" style="left:1121px;top:57px;width:1px;height:761px;background:#2b2b2b"></div><div class="a" style="left:1121px;top:57px;width:14px;height:137px;background:rgba(121,121,121,0.42)"></div><div class="a" style="left:66px;top:806px;width:653px;height:12px;background:rgba(121,121,121,0.4)"></div><div class="a" style="left:672px;top:720px;width:451.5px;height:84.5px;background:#252526;border-radius:4px;box-shadow:0 0 8px 2px rgba(0,0,0,0.45);border:1px solid #303031"></div><svg style="left:0;top:0" width="1" height="1"><g fill="none" stroke="#3794ff" stroke-width="1.2"><circle cx="691" cy="741.9" r="7.4"/></g><circle cx="691" cy="739.4" r="0.9" fill="#3794ff"/><rect x="690.3" y="741.2" width="1.4" height="3.8" fill="#3794ff"/><g stroke="#c5c5c5" stroke-width="1.1"><path d="M1098.9 738.4L1107.1 746.6M1107.1 738.4L1098.9 746.6"/></g></svg><div class="a" style="left:704.2px;top:734px;height:18px;line-height:18px;font-size:13px;color:#cccccc;letter-spacing:0.3px;white-space:nowrap;-webkit-text-stroke:0.15px #cccccc">The Marketplace has extensions that can help with '.twig' files</div><div class="a" style="left:764px;top:763px;width:134px;height:28px;background:#0e639c;border-radius:2px;color:#fff;font-size:13px;line-height:28px;text-align:center;letter-spacing:-0.2px;-webkit-text-stroke:0.15px #fff">Search Marketplace</div><div class="a" style="left:908px;top:763px;width:205px;height:28px;background:#3a3d41;border-radius:2px;color:#fff;font-size:13px;line-height:28px;text-align:center;-webkit-text-stroke:0.15px #fff">Don't Show Again for '.twig' files</div></div>
<div id="status" class="a"><svg style="left:0;top:0" width="1" height="1"><g fill="none" stroke="#fff" stroke-width="1.1"><circle cx="21.9" cy="10.9" r="5.7"/><path d="M19.6 8.6L24.2 13.2M24.2 8.6L19.6 13.2"/><path d="M50.1 4.6L44.6 14.3H55.6Z"/><path d="M50.1 8.5V11.6"/></g></svg><div class="st" style="left:32.6px">0</div><div class="st" style="left:61.2px">0</div><div class="st" style="left:1078.4px">Ln 1, Col 1</div><div class="st" style="left:1155.5px">Spaces: 4</div><div class="st" style="left:1227.7px">UTF-8</div><div class="st" style="left:1280.0px">LF</div><div class="st" style="left:1309.7px">Plain Text</div><svg style="left:0;top:0" width="1" height="1"><g fill="none" stroke="#fff" stroke-width="1.1" stroke-linejoin="round" stroke-linecap="round"><path d="M1384.2 6.9V5.3H1392.8V10.6L1389.6 12.1L1389.9 11.1"/><circle cx="1385.1" cy="10.4" r="2.2"/><path d="M1381.4 16.6Q1381.9 12.9 1385.1 12.9Q1388.4 12.9 1388.9 16.6"/><path d="M1412.6 14.9V10.4Q1412.6 5.2 1417.2 5.2Q1418.2 5.2 1418.6 5.4 M1421.3 11.4V14.9H1412.3 M1415.6 15.8Q1417.1 17.3 1418.6 15.8"/></g><circle cx="1420.6" cy="7.4" r="3.1" fill="#fff" stroke="#007acc" stroke-width="1"/></svg></div>
</div>
<div id="winborder"></div>
</body></html>
